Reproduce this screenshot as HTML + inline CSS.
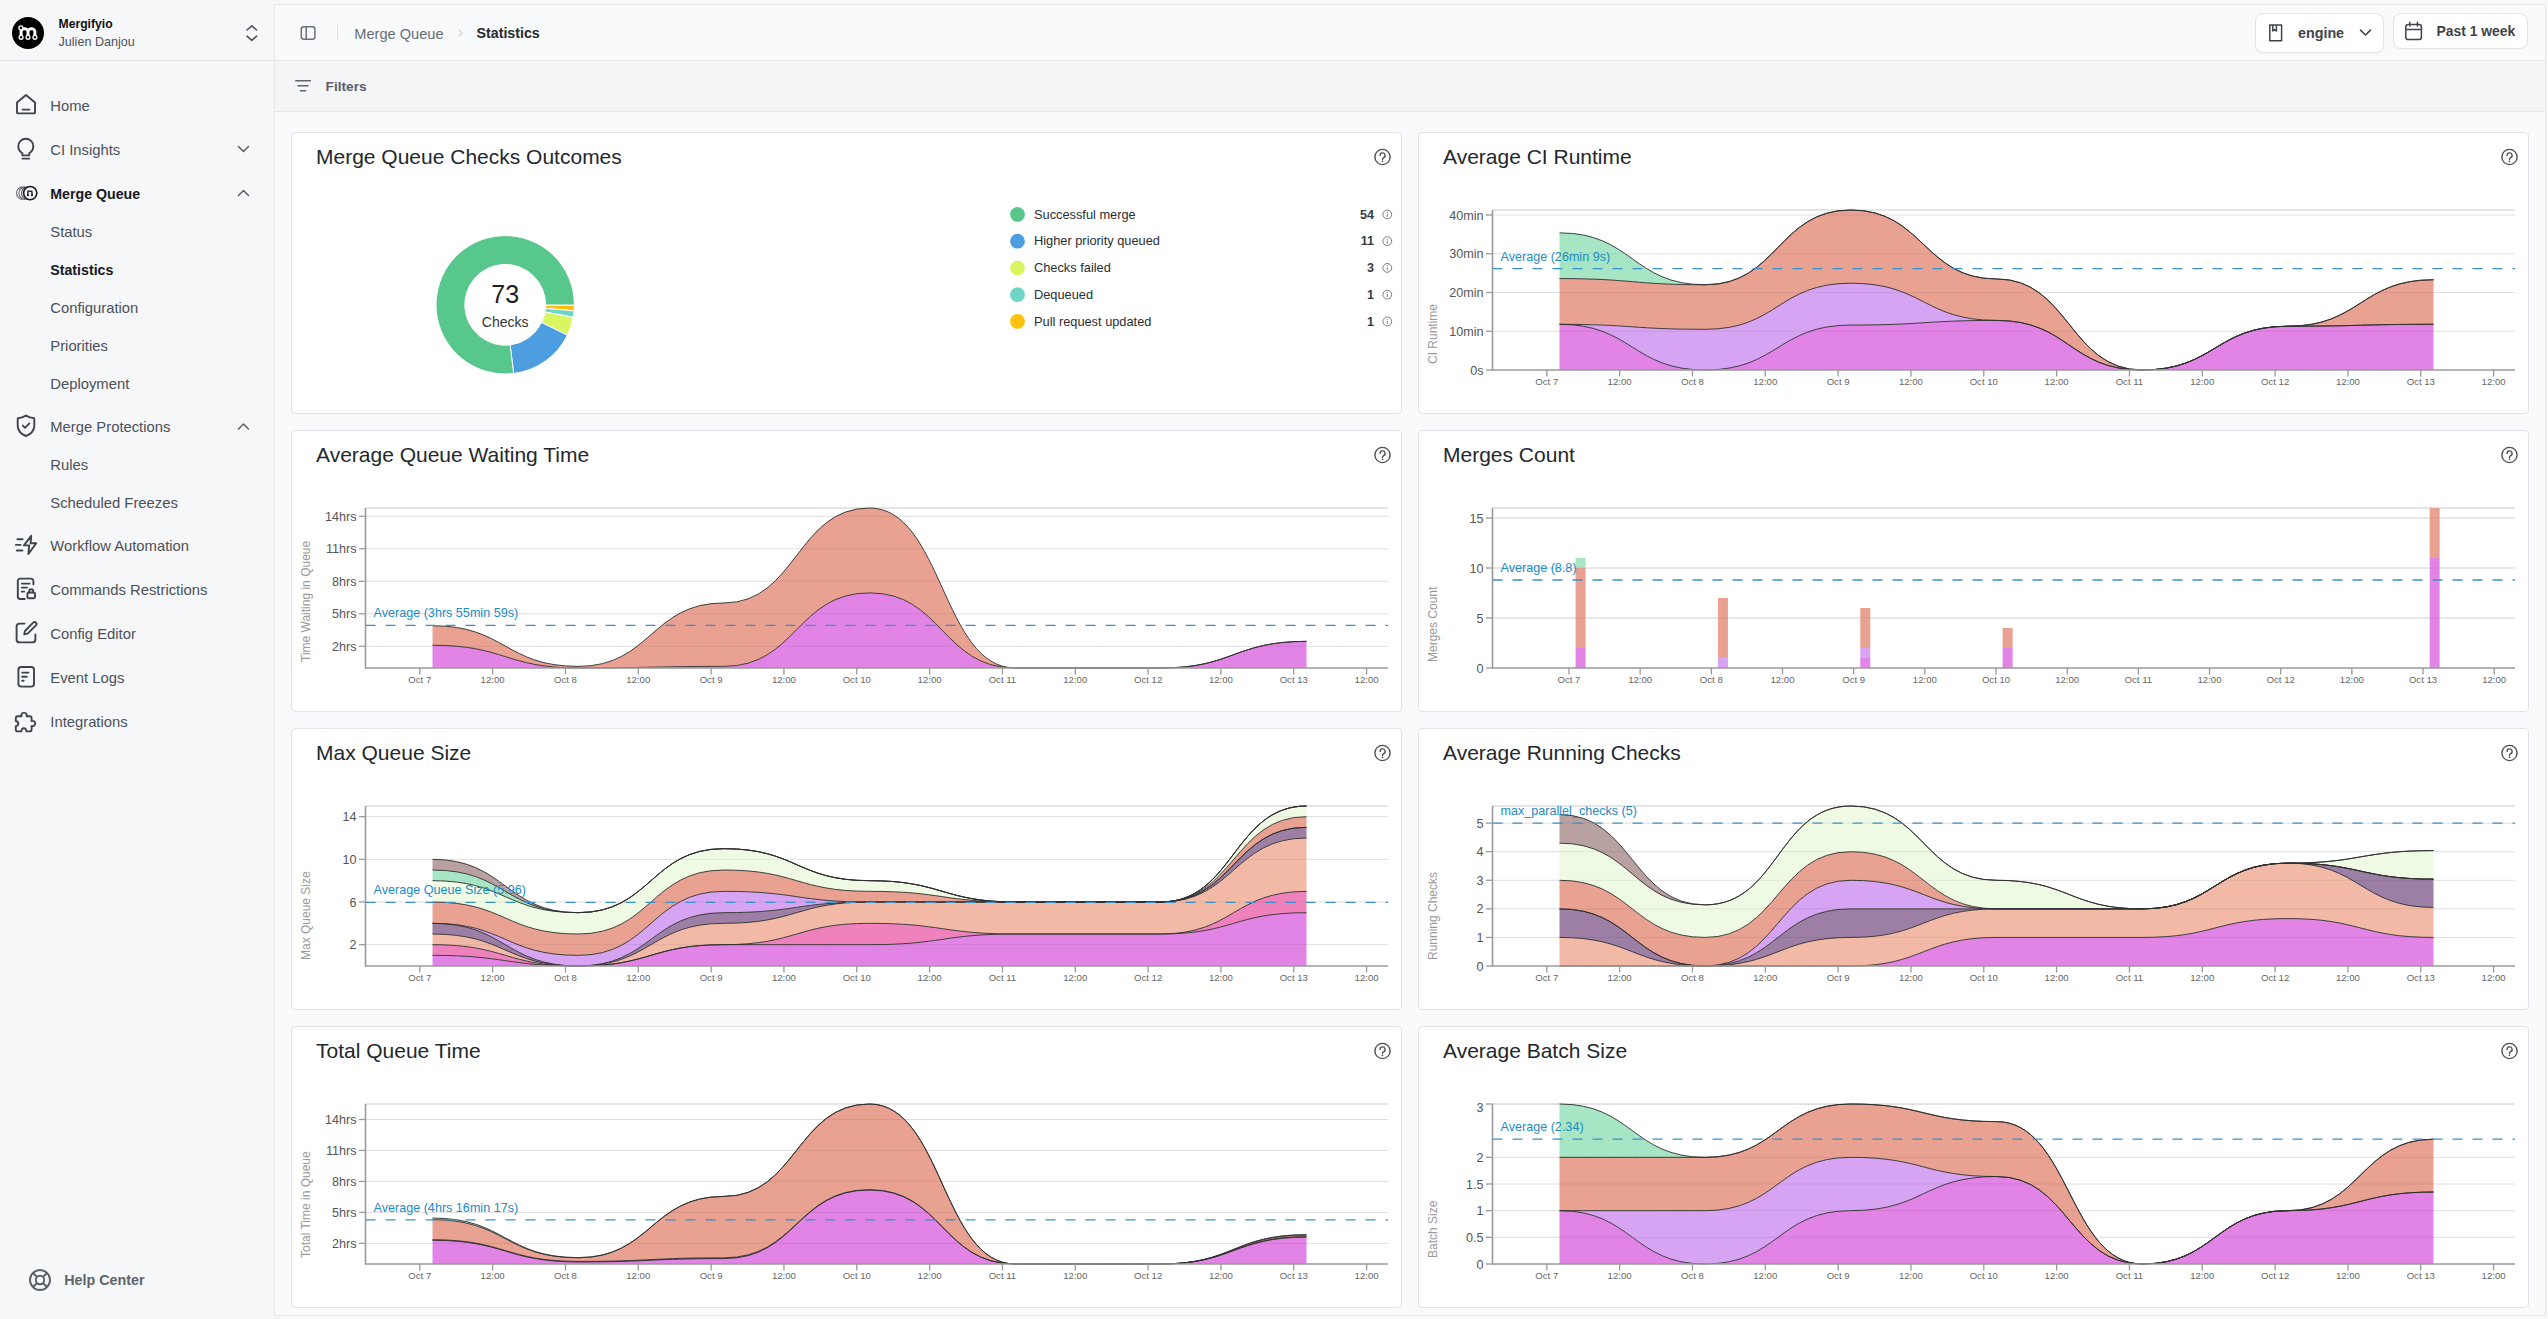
<!DOCTYPE html>
<html><head><meta charset="utf-8"><title>Merge Queue Statistics</title>
<style>
html,body{margin:0;padding:0;}
body{width:2548px;height:1319px;overflow:hidden;position:relative;background:#f6f7f9;font-family:"Liberation Sans", sans-serif;}
svg text{font-family:"Liberation Sans", sans-serif;}
.main{position:absolute;left:274px;top:4px;width:2270px;height:1310px;border:1px solid #e6e8eb;border-radius:2px;background:#f9fafb;overflow:hidden;}
.hdr{position:absolute;left:0;top:0;width:100%;height:55px;border-bottom:1px solid #e6e8eb;background:#f9fafb;}
.flt{position:absolute;left:0;top:56px;width:100%;height:50px;border-bottom:1px solid #e6e8eb;background:#f4f5f7;}
.card{position:absolute;background:#fff;border:1px solid #dfe2e6;border-radius:4px;}
.ch{position:absolute;overflow:visible;}
.btn{position:absolute;background:#fff;border:1px solid #e0e3e7;border-radius:8px;box-shadow:0 1px 2px rgba(0,0,0,0.04);}
</style></head><body>
<div class="main"><div class="hdr"></div><div class="flt"></div></div>
<div class="card" style="left:291px;top:132px;width:1109px;height:280px"></div><div class="card" style="left:291px;top:430px;width:1109px;height:280px"></div><div class="card" style="left:291px;top:728px;width:1109px;height:280px"></div><div class="card" style="left:291px;top:1026px;width:1109px;height:280px"></div><div class="card" style="left:1418px;top:132px;width:1109px;height:280px"></div><div class="card" style="left:1418px;top:430px;width:1109px;height:280px"></div><div class="card" style="left:1418px;top:728px;width:1109px;height:280px"></div><div class="card" style="left:1418px;top:1026px;width:1109px;height:280px"></div>
<svg class="ch" style="left:0;top:0" width="274" height="1319" viewBox="0 0 274 1319">
<circle cx="28" cy="33" r="16" fill="#000"/>
<path d="M21.1,36.2 V31.6 A3.45,2.9 0 0 1 28,31.6 V36.2 M28,31.6 A3.45,2.9 0 0 1 34.9,31.6 V36.2" fill="none" stroke="#fff" stroke-width="3"/>
<circle cx="20.9" cy="27.9" r="1.95" fill="#000" stroke="#fff" stroke-width="1.3"/>
<circle cx="21.1" cy="37.3" r="1.95" fill="#000" stroke="#fff" stroke-width="1.3"/>
<circle cx="28" cy="37.3" r="1.95" fill="#000" stroke="#fff" stroke-width="1.3"/>
<circle cx="34.9" cy="37.3" r="1.95" fill="#000" stroke="#fff" stroke-width="1.3"/>
<text x="58.5" y="28" font-size="12.2" fill="#111" font-weight="700" text-anchor="start" >Mergifyio</text>
<text x="58.5" y="46" font-size="12.6" fill="#4b5058" text-anchor="start" >Julien Danjou</text>
<path d="M247,30 L251.8,25.8 L256.6,30 M247,36.2 L251.8,40.4 L256.6,36.2" fill="none" stroke="#4b5058" stroke-width="1.6" stroke-linecap="round" stroke-linejoin="round"/>
<line x1="0" y1="60.5" x2="274" y2="60.5" stroke="#e3e6ea" stroke-width="1"/>
<text x="50.3" y="110.8" font-size="14.8" fill="#4b5058" text-anchor="start" >Home</text>
<text x="50.3" y="155" font-size="14.8" fill="#4b5058" text-anchor="start" >CI Insights</text>
<text x="50.3" y="199.2" font-size="14.2" fill="#16191d" font-weight="700" text-anchor="start" >Merge Queue</text>
<text x="50.3" y="237" font-size="14.8" fill="#4b5058" text-anchor="start" >Status</text>
<text x="50.3" y="275" font-size="14.2" fill="#16191d" font-weight="700" text-anchor="start" >Statistics</text>
<text x="50.3" y="313.3" font-size="14.8" fill="#4b5058" text-anchor="start" >Configuration</text>
<text x="50.3" y="351" font-size="14.8" fill="#4b5058" text-anchor="start" >Priorities</text>
<text x="50.3" y="389" font-size="14.8" fill="#4b5058" text-anchor="start" >Deployment</text>
<text x="50.3" y="432" font-size="14.8" fill="#4b5058" text-anchor="start" >Merge Protections</text>
<text x="50.3" y="470" font-size="14.8" fill="#4b5058" text-anchor="start" >Rules</text>
<text x="50.3" y="508" font-size="14.8" fill="#4b5058" text-anchor="start" >Scheduled Freezes</text>
<text x="50.3" y="551" font-size="14.8" fill="#4b5058" text-anchor="start" >Workflow Automation</text>
<text x="50.3" y="595" font-size="14.8" fill="#4b5058" text-anchor="start" >Commands Restrictions</text>
<text x="50.3" y="639" font-size="14.8" fill="#4b5058" text-anchor="start" >Config Editor</text>
<text x="50.3" y="683" font-size="14.8" fill="#4b5058" text-anchor="start" >Event Logs</text>
<text x="50.3" y="727" font-size="14.8" fill="#4b5058" text-anchor="start" >Integrations</text>
<path d="M17,102.5 L26,95 L35,102.5 V112.4 a1,1 0 0 1 -1,1 H18 a1,1 0 0 1 -1,-1 Z M22.5,109.6 H29.5" fill="none" stroke="#3f444b" stroke-width="1.9" stroke-linecap="round" stroke-linejoin="round"/>
<path d="M22.4,153.2 C19.8,151.5 18.3,149 18.3,146.2 C18.3,141.9 21.8,138.7 25.8,138.7 C29.8,138.7 33.3,141.9 33.3,146.2 C33.3,149 31.8,151.5 29.2,153.2 V155.4 H22.4 Z M22.4,158.6 H29.2" fill="none" stroke="#3f444b" stroke-width="1.9" stroke-linecap="round" stroke-linejoin="round"/>
<path d="M22.6,186.9 A6.1,6.3 0 0 0 22.6,199.5" fill="none" stroke="#3f444b" stroke-opacity="0.75" stroke-width="1.1"/>
<path d="M25,186.9 A6.1,6.3 0 0 0 25,199.5" fill="none" stroke="#3f444b" stroke-opacity="0.8" stroke-width="1.1"/>
<path d="M27.6,186.9 A6.1,6.3 0 0 0 27.6,199.5" fill="none" stroke="#3f444b" stroke-opacity="0.9" stroke-width="1.1"/>
<circle cx="30.2" cy="193.1" r="6.6" fill="#f6f7f9" stroke="#1a1d21" stroke-width="1.6"/>
<path d="M27.9,195.6 V190.6 M27.9,191.3 H31.4 a0.6,0.6 0 0 1 0.6,0.6 V195.6" fill="none" stroke="#2a2d31" stroke-width="1.5"/>
<circle cx="27.9" cy="195.3" r="1" fill="#111"/><circle cx="32" cy="195.3" r="1" fill="#111"/>
<path d="M238.5,146.5 L243.5,151.5 L248.5,146.5" fill="none" stroke="#5b6068" stroke-width="1.5" stroke-linecap="round" stroke-linejoin="round"/>
<path d="M238.5,195.5 L243.5,190.5 L248.5,195.5" fill="none" stroke="#5b6068" stroke-width="1.5" stroke-linecap="round" stroke-linejoin="round"/>
<path d="M238.5,429 L243.5,424 L248.5,429" fill="none" stroke="#5b6068" stroke-width="1.5" stroke-linecap="round" stroke-linejoin="round"/>
<path d="M26,415.6 C28.6,417.6 31.5,418.2 34.2,418.2 C34.4,421.5 34.4,424.5 34.2,427 C33.6,431.5 30,434.5 26,436 C22,434.5 18.4,431.5 17.8,427 C17.6,424.5 17.6,421.5 17.8,418.2 C20.5,418.2 23.4,417.6 26,415.6 Z M22.8,425.6 L25,427.8 L29.4,423.4" fill="none" stroke="#3f444b" stroke-width="1.9" stroke-linecap="round" stroke-linejoin="round"/>
<path d="M31.2,535.8 L23.9,545.4 H29.2 L28.4,554 L36.2,543.3 H30.6 Z" fill="none" stroke="#3f444b" stroke-width="1.9" stroke-linecap="round" stroke-linejoin="round"/><path d="M17.4,539.3 H22.6 M15.9,544.9 H20.6 M16.8,550.5 H22.4" fill="none" stroke="#3f444b" stroke-width="1.9" stroke-linecap="round" stroke-linejoin="round"/>
<path d="M24.7,599 H20.2 a2.4,2.4 0 0 1 -2.4,-2.4 V581 a2.4,2.4 0 0 1 2.4,-2.4 H31 a2.4,2.4 0 0 1 2.4,2.4 V584.4 M21.8,583.6 H29.6 M21.8,587.6 H27 M21.8,591.6 H24.2" fill="none" stroke="#3f444b" stroke-width="1.9" stroke-linecap="round" stroke-linejoin="round"/>
<rect x="27.4" y="592.5" width="7.6" height="5.8" rx="1.4" fill="none" stroke="#3f444b" stroke-width="1.9" stroke-linecap="round" stroke-linejoin="round"/><path d="M29.2,592.5 V591.3 a2,2 0 0 1 4,0 V592.5" fill="none" stroke="#3f444b" stroke-width="1.9" stroke-linecap="round" stroke-linejoin="round"/>
<path d="M24.6,623.6 H19.6 a3,3 0 0 0 -3,3 V639.4 a3,3 0 0 0 3,3 H32.4 a3,3 0 0 0 3,-3 V634.4" fill="none" stroke="#3f444b" stroke-width="1.9" stroke-linecap="round" stroke-linejoin="round"/><path d="M33.2,622.6 a1.9,1.9 0 0 1 2.7,2.7 L27.6,633.6 L24.2,634.4 L25,631 Z" fill="none" stroke="#3f444b" stroke-width="1.9" stroke-linecap="round" stroke-linejoin="round"/>
<rect x="18.4" y="667" width="15.6" height="19.6" rx="2.8" fill="none" stroke="#3f444b" stroke-width="1.9" stroke-linecap="round" stroke-linejoin="round"/><path d="M22.2,672.6 H28.4 M22.2,676.7 H26.8 M22.2,680.7 H23.6" fill="none" stroke="#3f444b" stroke-width="1.9" stroke-linecap="round" stroke-linejoin="round"/>
<path d="M17.8,716.2 H21.5 a2.7,2.7 0 1 1 5.1,0 H29.6 a2,2 0 0 1 2,2 V721 a2.7,2.7 0 1 1 0,5.1 V729.4 a2,2 0 0 1 -2,2 H26.3 a2.5,2.5 0 1 0 -4.8,0 H17.8 a2,2 0 0 1 -2,-2 V726.1 a2.5,2.5 0 1 0 0,-5 V718.2 a2,2 0 0 1 2,-2 Z" fill="none" stroke="#3f444b" stroke-width="1.9" stroke-linecap="round" stroke-linejoin="round"/>
<circle cx="40" cy="1280" r="10" fill="none" stroke="#5b6068" stroke-width="1.9"/><circle cx="40" cy="1280" r="4.2" fill="none" stroke="#5b6068" stroke-width="1.9"/>
<path d="M33,1273 L37,1277 M47,1273 L43,1277 M33,1287 L37,1283 M47,1287 L43,1283" stroke="#5b6068" stroke-width="1.9"/>
<text x="64.3" y="1285.2" font-size="14.3" fill="#5d636b" font-weight="700" text-anchor="start" >Help Center</text>
</svg>
<svg class="ch" style="left:274px;top:0" width="2274" height="120" viewBox="274 0 2274 120">
<rect x="301.3" y="26.8" width="13.6" height="12.4" rx="2.4" fill="none" stroke="#6b7079" stroke-width="1.5"/><line x1="306.2" y1="26.8" x2="306.2" y2="39.2" stroke="#6b7079" stroke-width="1.5"/>
<line x1="337.6" y1="25" x2="337.6" y2="40.5" stroke="#dfe2e6" stroke-width="1"/>
<text x="354.3" y="39" font-size="14.6" fill="#666d77" text-anchor="start" >Merge Queue</text>
<path d="M458.5,29.5 L462,33 L458.5,36.5" fill="none" stroke="#cfd2d7" stroke-width="1.2"/>
<text x="476.6" y="38.3" font-size="14.2" fill="#262a2f" font-weight="700" text-anchor="start" >Statistics</text>
<path d="M295.2,80.7 H311 M297.6,85.8 H308.6 M300,90.8 H306.2" stroke="#5f6670" stroke-width="1.6"/>
<text x="325.6" y="90.8" font-size="13.7" fill="#59606a" font-weight="700" text-anchor="start" >Filters</text>
</svg>
<div class="btn" style="left:2255px;top:13px;width:127px;height:38px"></div>
<div class="btn" style="left:2393px;top:13px;width:133px;height:34px"></div>
<svg class="ch" style="left:2240px;top:0" width="308" height="60" viewBox="2240 0 308 60">
<path d="M2269.8,25 H2281.6 V40.8 H2269.8 Z M2272.8,25 V31 L2274.6,29.6 L2276.4,31 V25" fill="none" stroke="#3f444b" stroke-width="1.5" stroke-linejoin="round"/>
<text x="2298" y="38" font-size="14.3" fill="#3f444b" font-weight="700" text-anchor="start" >engine</text>
<path d="M2360.5,30.2 L2365.5,35 L2370.5,30.2" fill="none" stroke="#3f444b" stroke-width="1.6" stroke-linecap="round" stroke-linejoin="round"/>
<rect x="2405.8" y="24.4" width="15.6" height="15.2" rx="2.4" fill="none" stroke="#3f444b" stroke-width="1.5"/><path d="M2405.8,29.6 H2421.4 M2409.8,22.2 V26 M2417.4,22.2 V26" stroke="#3f444b" stroke-width="1.5" stroke-linecap="round"/>
<text x="2436.5" y="36.2" font-size="13.9" fill="#3f444b" font-weight="700" text-anchor="start" >Past 1 week</text>
</svg>
<svg class="ch" style="left:1418px;top:132px" width="1111" height="282" viewBox="1418 132 1111 282">
<text x="1443" y="164" font-size="21" fill="#23282d" text-anchor="start" >Average CI Runtime</text>
<circle cx="2509.5" cy="157" r="7.6" fill="none" stroke="#4b5058" stroke-width="1.4"/><path d="M2507.1,155.4 a2.5,2.5 0 1 1 3.6,2.2 c-0.9,0.45 -1.2,0.9 -1.2,1.9" fill="none" stroke="#4b5058" stroke-width="1.4" stroke-linecap="round"/><circle cx="2509.5" cy="161.3" r="0.85" fill="#4b5058"/>
<line x1="1492.5" y1="210" x2="2515" y2="210" stroke="#dcdcdc" stroke-width="1.5"/>
<line x1="1492.5" y1="331.26" x2="2515" y2="331.26" stroke="#dedede" stroke-width="1"/>
<line x1="1492.5" y1="292.52" x2="2515" y2="292.52" stroke="#dedede" stroke-width="1"/>
<line x1="1492.5" y1="253.78" x2="2515" y2="253.78" stroke="#dedede" stroke-width="1"/>
<line x1="1492.5" y1="215.04" x2="2515" y2="215.04" stroke="#dedede" stroke-width="1"/>
<path d="M1559.5,324.29 C1632.34,324.29 1632.34,370 1705.17,370 C1778.01,370 1778.01,325.06 1850.84,325.06 C1923.67,325.06 1923.67,320.41 1996.51,320.41 C2069.34,320.41 2069.34,370 2142.18,370 C2215.01,370 2215.01,326.22 2287.85,326.22 C2360.68,326.22 2360.68,324.29 2433.52,324.29 L2433.52,370 C2360.68,370 2360.68,370 2287.85,370 C2215.01,370 2215.01,370 2142.18,370 C2069.34,370 2069.34,370 1996.51,370 C1923.67,370 1923.67,370 1850.84,370 C1778.01,370 1778.01,370 1705.17,370 C1632.34,370 1632.34,370 1559.5,370 Z" fill="#e283e6"/>
<path d="M1559.5,324.29 C1632.34,324.29 1632.34,329.32 1705.17,329.32 C1778.01,329.32 1778.01,283.22 1850.84,283.22 C1923.67,283.22 1923.67,320.41 1996.51,320.41 C2069.34,320.41 2069.34,370 2142.18,370 C2215.01,370 2215.01,326.22 2287.85,326.22 C2360.68,326.22 2360.68,324.29 2433.52,324.29 L2433.52,324.29 C2360.68,324.29 2360.68,326.22 2287.85,326.22 C2215.01,326.22 2215.01,370 2142.18,370 C2069.34,370 2069.34,320.41 1996.51,320.41 C1923.67,320.41 1923.67,325.06 1850.84,325.06 C1778.01,325.06 1778.01,370 1705.17,370 C1632.34,370 1632.34,324.29 1559.5,324.29 Z" fill="#d7a3f3"/>
<path d="M1559.5,278.57 C1632.34,278.57 1632.34,284.77 1705.17,284.77 C1778.01,284.77 1778.01,210 1850.84,210 C1923.67,210 1923.67,278.96 1996.51,278.96 C2069.34,278.96 2069.34,370 2142.18,370 C2215.01,370 2215.01,326.22 2287.85,326.22 C2360.68,326.22 2360.68,279.73 2433.52,279.73 L2433.52,324.29 C2360.68,324.29 2360.68,326.22 2287.85,326.22 C2215.01,326.22 2215.01,370 2142.18,370 C2069.34,370 2069.34,320.41 1996.51,320.41 C1923.67,320.41 1923.67,283.22 1850.84,283.22 C1778.01,283.22 1778.01,329.32 1705.17,329.32 C1632.34,329.32 1632.34,324.29 1559.5,324.29 Z" fill="#e9a192"/>
<path d="M1559.5,232.86 C1632.34,232.86 1632.34,284.77 1705.17,284.77 C1778.01,284.77 1778.01,210 1850.84,210 C1923.67,210 1923.67,278.96 1996.51,278.96 C2069.34,278.96 2069.34,370 2142.18,370 C2215.01,370 2215.01,326.22 2287.85,326.22 C2360.68,326.22 2360.68,279.73 2433.52,279.73 L2433.52,279.73 C2360.68,279.73 2360.68,326.22 2287.85,326.22 C2215.01,326.22 2215.01,370 2142.18,370 C2069.34,370 2069.34,278.96 1996.51,278.96 C1923.67,278.96 1923.67,210 1850.84,210 C1778.01,210 1778.01,284.77 1705.17,284.77 C1632.34,284.77 1632.34,278.57 1559.5,278.57 Z" fill="#a7e6c5"/>
<clipPath id="clip1418_132"><path d="M1559.5,232.86 C1632.34,232.86 1632.34,284.77 1705.17,284.77 C1778.01,284.77 1778.01,210 1850.84,210 C1923.67,210 1923.67,278.96 1996.51,278.96 C2069.34,278.96 2069.34,370 2142.18,370 C2215.01,370 2215.01,326.22 2287.85,326.22 C2360.68,326.22 2360.68,279.73 2433.52,279.73 L2433.52,370 L1559.5,370 Z"/></clipPath><g clip-path="url(#clip1418_132)">
<line x1="1559.5" y1="331.26" x2="2433.52" y2="331.26" stroke="#000" stroke-opacity="0.07" stroke-width="1"/>
<line x1="1559.5" y1="292.52" x2="2433.52" y2="292.52" stroke="#000" stroke-opacity="0.07" stroke-width="1"/>
<line x1="1559.5" y1="253.78" x2="2433.52" y2="253.78" stroke="#000" stroke-opacity="0.07" stroke-width="1"/>
<line x1="1559.5" y1="215.04" x2="2433.52" y2="215.04" stroke="#000" stroke-opacity="0.07" stroke-width="1"/>
</g>
<path d="M1559.5,324.29 C1632.34,324.29 1632.34,370 1705.17,370 C1778.01,370 1778.01,325.06 1850.84,325.06 C1923.67,325.06 1923.67,320.41 1996.51,320.41 C2069.34,320.41 2069.34,370 2142.18,370 C2215.01,370 2215.01,326.22 2287.85,326.22 C2360.68,326.22 2360.68,324.29 2433.52,324.29" fill="none" stroke="#303030" stroke-opacity="0.92" stroke-width="1"/>
<path d="M1559.5,324.29 C1632.34,324.29 1632.34,329.32 1705.17,329.32 C1778.01,329.32 1778.01,283.22 1850.84,283.22 C1923.67,283.22 1923.67,320.41 1996.51,320.41 C2069.34,320.41 2069.34,370 2142.18,370 C2215.01,370 2215.01,326.22 2287.85,326.22 C2360.68,326.22 2360.68,324.29 2433.52,324.29" fill="none" stroke="#303030" stroke-opacity="0.92" stroke-width="1"/>
<path d="M1559.5,278.57 C1632.34,278.57 1632.34,284.77 1705.17,284.77 C1778.01,284.77 1778.01,210 1850.84,210 C1923.67,210 1923.67,278.96 1996.51,278.96 C2069.34,278.96 2069.34,370 2142.18,370 C2215.01,370 2215.01,326.22 2287.85,326.22 C2360.68,326.22 2360.68,279.73 2433.52,279.73" fill="none" stroke="#303030" stroke-opacity="0.92" stroke-width="1"/>
<path d="M1559.5,232.86 C1632.34,232.86 1632.34,284.77 1705.17,284.77 C1778.01,284.77 1778.01,210 1850.84,210 C1923.67,210 1923.67,278.96 1996.51,278.96 C2069.34,278.96 2069.34,370 2142.18,370 C2215.01,370 2215.01,326.22 2287.85,326.22 C2360.68,326.22 2360.68,279.73 2433.52,279.73" fill="none" stroke="#303030" stroke-opacity="0.92" stroke-width="1"/>
<line x1="1492.5" y1="210" x2="1492.5" y2="370.75" stroke="#9a9a9a" stroke-width="1.6"/>
<line x1="1492.5" y1="370" x2="2515" y2="370" stroke="#9a9a9a" stroke-width="1.6"/>
<line x1="1486" y1="370" x2="1492.5" y2="370" stroke="#9a9a9a" stroke-width="1.3"/>
<text x="1483.5" y="374.5" font-size="12.6" fill="#555" text-anchor="end" >0s</text>
<line x1="1486" y1="331.26" x2="1492.5" y2="331.26" stroke="#9a9a9a" stroke-width="1.3"/>
<text x="1483.5" y="335.76" font-size="12.6" fill="#555" text-anchor="end" >10min</text>
<line x1="1486" y1="292.52" x2="1492.5" y2="292.52" stroke="#9a9a9a" stroke-width="1.3"/>
<text x="1483.5" y="297.02" font-size="12.6" fill="#555" text-anchor="end" >20min</text>
<line x1="1486" y1="253.78" x2="1492.5" y2="253.78" stroke="#9a9a9a" stroke-width="1.3"/>
<text x="1483.5" y="258.28" font-size="12.6" fill="#555" text-anchor="end" >30min</text>
<line x1="1486" y1="215.04" x2="1492.5" y2="215.04" stroke="#9a9a9a" stroke-width="1.3"/>
<text x="1483.5" y="219.54" font-size="12.6" fill="#555" text-anchor="end" >40min</text>
<line x1="1546.8" y1="370" x2="1546.8" y2="376.5" stroke="#9a9a9a" stroke-width="1.3"/>
<text x="1546.8" y="385" font-size="9.6" fill="#666" text-anchor="middle" >Oct 7</text>
<line x1="1619.63" y1="370" x2="1619.63" y2="376.5" stroke="#9a9a9a" stroke-width="1.3"/>
<text x="1619.63" y="385" font-size="9.6" fill="#666" text-anchor="middle" >12:00</text>
<line x1="1692.46" y1="370" x2="1692.46" y2="376.5" stroke="#9a9a9a" stroke-width="1.3"/>
<text x="1692.46" y="385" font-size="9.6" fill="#666" text-anchor="middle" >Oct 8</text>
<line x1="1765.29" y1="370" x2="1765.29" y2="376.5" stroke="#9a9a9a" stroke-width="1.3"/>
<text x="1765.29" y="385" font-size="9.6" fill="#666" text-anchor="middle" >12:00</text>
<line x1="1838.12" y1="370" x2="1838.12" y2="376.5" stroke="#9a9a9a" stroke-width="1.3"/>
<text x="1838.12" y="385" font-size="9.6" fill="#666" text-anchor="middle" >Oct 9</text>
<line x1="1910.95" y1="370" x2="1910.95" y2="376.5" stroke="#9a9a9a" stroke-width="1.3"/>
<text x="1910.95" y="385" font-size="9.6" fill="#666" text-anchor="middle" >12:00</text>
<line x1="1983.78" y1="370" x2="1983.78" y2="376.5" stroke="#9a9a9a" stroke-width="1.3"/>
<text x="1983.78" y="385" font-size="9.6" fill="#666" text-anchor="middle" >Oct 10</text>
<line x1="2056.61" y1="370" x2="2056.61" y2="376.5" stroke="#9a9a9a" stroke-width="1.3"/>
<text x="2056.61" y="385" font-size="9.6" fill="#666" text-anchor="middle" >12:00</text>
<line x1="2129.44" y1="370" x2="2129.44" y2="376.5" stroke="#9a9a9a" stroke-width="1.3"/>
<text x="2129.44" y="385" font-size="9.6" fill="#666" text-anchor="middle" >Oct 11</text>
<line x1="2202.27" y1="370" x2="2202.27" y2="376.5" stroke="#9a9a9a" stroke-width="1.3"/>
<text x="2202.27" y="385" font-size="9.6" fill="#666" text-anchor="middle" >12:00</text>
<line x1="2275.1" y1="370" x2="2275.1" y2="376.5" stroke="#9a9a9a" stroke-width="1.3"/>
<text x="2275.1" y="385" font-size="9.6" fill="#666" text-anchor="middle" >Oct 12</text>
<line x1="2347.93" y1="370" x2="2347.93" y2="376.5" stroke="#9a9a9a" stroke-width="1.3"/>
<text x="2347.93" y="385" font-size="9.6" fill="#666" text-anchor="middle" >12:00</text>
<line x1="2420.76" y1="370" x2="2420.76" y2="376.5" stroke="#9a9a9a" stroke-width="1.3"/>
<text x="2420.76" y="385" font-size="9.6" fill="#666" text-anchor="middle" >Oct 13</text>
<line x1="2493.59" y1="370" x2="2493.59" y2="376.5" stroke="#9a9a9a" stroke-width="1.3"/>
<text x="2493.59" y="385" font-size="9.6" fill="#666" text-anchor="middle" >12:00</text>
<text transform="translate(1437,364) rotate(-90)" font-size="12" fill="#999" text-anchor="start" x="0" y="0">CI Runtime</text>
<line x1="1492.5" y1="268.69" x2="2515" y2="268.69" stroke="#3b91c9" stroke-width="1.3" stroke-dasharray="10 10"/>
<text x="1500.5" y="260.69" font-size="12.6" fill="#218bc5" text-anchor="start" >Average (26min 9s)</text>
</svg><svg class="ch" style="left:291px;top:430px" width="1111" height="282" viewBox="291 430 1111 282">
<text x="316" y="462" font-size="21" fill="#23282d" text-anchor="start" >Average Queue Waiting Time</text>
<circle cx="1382.5" cy="455" r="7.6" fill="none" stroke="#4b5058" stroke-width="1.4"/><path d="M1380.1,453.4 a2.5,2.5 0 1 1 3.6,2.2 c-0.9,0.45 -1.2,0.9 -1.2,1.9" fill="none" stroke="#4b5058" stroke-width="1.4" stroke-linecap="round"/><circle cx="1382.5" cy="459.3" r="0.85" fill="#4b5058"/>
<line x1="365.5" y1="508" x2="1388" y2="508" stroke="#dcdcdc" stroke-width="1.5"/>
<line x1="365.5" y1="646.32" x2="1388" y2="646.32" stroke="#dedede" stroke-width="1"/>
<line x1="365.5" y1="613.8" x2="1388" y2="613.8" stroke="#dedede" stroke-width="1"/>
<line x1="365.5" y1="581.28" x2="1388" y2="581.28" stroke="#dedede" stroke-width="1"/>
<line x1="365.5" y1="548.76" x2="1388" y2="548.76" stroke="#dedede" stroke-width="1"/>
<line x1="365.5" y1="516.24" x2="1388" y2="516.24" stroke="#dedede" stroke-width="1"/>
<path d="M432.5,645.24 C505.33,645.24 505.33,668 578.17,668 C651,668 651,666.37 723.84,666.37 C796.67,666.37 796.67,592.88 869.51,592.88 C942.35,592.88 942.35,668 1015.18,668 C1088.01,668 1088.01,668 1160.85,668 C1233.68,668 1233.68,641.33 1306.52,641.33 L1306.52,668 C1233.68,668 1233.68,668 1160.85,668 C1088.01,668 1088.01,668 1015.18,668 C942.35,668 942.35,668 869.51,668 C796.67,668 796.67,668 723.84,668 C651,668 651,668 578.17,668 C505.33,668 505.33,668 432.5,668 Z" fill="#e283e6"/>
<path d="M432.5,625.72 C505.33,625.72 505.33,666.37 578.17,666.37 C651,666.37 651,602.96 723.84,602.96 C796.67,602.96 796.67,508 869.51,508 C942.35,508 942.35,668 1015.18,668 C1088.01,668 1088.01,668 1160.85,668 C1233.68,668 1233.68,641.33 1306.52,641.33 L1306.52,641.33 C1233.68,641.33 1233.68,668 1160.85,668 C1088.01,668 1088.01,668 1015.18,668 C942.35,668 942.35,592.88 869.51,592.88 C796.67,592.88 796.67,666.37 723.84,666.37 C651,666.37 651,668 578.17,668 C505.33,668 505.33,645.24 432.5,645.24 Z" fill="#e9a192"/>
<clipPath id="clip291_430"><path d="M432.5,625.72 C505.33,625.72 505.33,666.37 578.17,666.37 C651,666.37 651,602.96 723.84,602.96 C796.67,602.96 796.67,508 869.51,508 C942.35,508 942.35,668 1015.18,668 C1088.01,668 1088.01,668 1160.85,668 C1233.68,668 1233.68,641.33 1306.52,641.33 L1306.52,668 L432.5,668 Z"/></clipPath><g clip-path="url(#clip291_430)">
<line x1="432.5" y1="646.32" x2="1306.52" y2="646.32" stroke="#000" stroke-opacity="0.07" stroke-width="1"/>
<line x1="432.5" y1="613.8" x2="1306.52" y2="613.8" stroke="#000" stroke-opacity="0.07" stroke-width="1"/>
<line x1="432.5" y1="581.28" x2="1306.52" y2="581.28" stroke="#000" stroke-opacity="0.07" stroke-width="1"/>
<line x1="432.5" y1="548.76" x2="1306.52" y2="548.76" stroke="#000" stroke-opacity="0.07" stroke-width="1"/>
<line x1="432.5" y1="516.24" x2="1306.52" y2="516.24" stroke="#000" stroke-opacity="0.07" stroke-width="1"/>
</g>
<path d="M432.5,645.24 C505.33,645.24 505.33,668 578.17,668 C651,668 651,666.37 723.84,666.37 C796.67,666.37 796.67,592.88 869.51,592.88 C942.35,592.88 942.35,668 1015.18,668 C1088.01,668 1088.01,668 1160.85,668 C1233.68,668 1233.68,641.33 1306.52,641.33" fill="none" stroke="#303030" stroke-opacity="0.92" stroke-width="1"/>
<path d="M432.5,625.72 C505.33,625.72 505.33,666.37 578.17,666.37 C651,666.37 651,602.96 723.84,602.96 C796.67,602.96 796.67,508 869.51,508 C942.35,508 942.35,668 1015.18,668 C1088.01,668 1088.01,668 1160.85,668 C1233.68,668 1233.68,641.33 1306.52,641.33" fill="none" stroke="#303030" stroke-opacity="0.92" stroke-width="1"/>
<line x1="365.5" y1="508" x2="365.5" y2="668.75" stroke="#9a9a9a" stroke-width="1.6"/>
<line x1="365.5" y1="668" x2="1388" y2="668" stroke="#9a9a9a" stroke-width="1.6"/>
<line x1="359" y1="646.32" x2="365.5" y2="646.32" stroke="#9a9a9a" stroke-width="1.3"/>
<text x="356.5" y="650.82" font-size="12.6" fill="#555" text-anchor="end" >2hrs</text>
<line x1="359" y1="613.8" x2="365.5" y2="613.8" stroke="#9a9a9a" stroke-width="1.3"/>
<text x="356.5" y="618.3" font-size="12.6" fill="#555" text-anchor="end" >5hrs</text>
<line x1="359" y1="581.28" x2="365.5" y2="581.28" stroke="#9a9a9a" stroke-width="1.3"/>
<text x="356.5" y="585.78" font-size="12.6" fill="#555" text-anchor="end" >8hrs</text>
<line x1="359" y1="548.76" x2="365.5" y2="548.76" stroke="#9a9a9a" stroke-width="1.3"/>
<text x="356.5" y="553.26" font-size="12.6" fill="#555" text-anchor="end" >11hrs</text>
<line x1="359" y1="516.24" x2="365.5" y2="516.24" stroke="#9a9a9a" stroke-width="1.3"/>
<text x="356.5" y="520.74" font-size="12.6" fill="#555" text-anchor="end" >14hrs</text>
<line x1="419.8" y1="668" x2="419.8" y2="674.5" stroke="#9a9a9a" stroke-width="1.3"/>
<text x="419.8" y="683" font-size="9.6" fill="#666" text-anchor="middle" >Oct 7</text>
<line x1="492.63" y1="668" x2="492.63" y2="674.5" stroke="#9a9a9a" stroke-width="1.3"/>
<text x="492.63" y="683" font-size="9.6" fill="#666" text-anchor="middle" >12:00</text>
<line x1="565.46" y1="668" x2="565.46" y2="674.5" stroke="#9a9a9a" stroke-width="1.3"/>
<text x="565.46" y="683" font-size="9.6" fill="#666" text-anchor="middle" >Oct 8</text>
<line x1="638.29" y1="668" x2="638.29" y2="674.5" stroke="#9a9a9a" stroke-width="1.3"/>
<text x="638.29" y="683" font-size="9.6" fill="#666" text-anchor="middle" >12:00</text>
<line x1="711.12" y1="668" x2="711.12" y2="674.5" stroke="#9a9a9a" stroke-width="1.3"/>
<text x="711.12" y="683" font-size="9.6" fill="#666" text-anchor="middle" >Oct 9</text>
<line x1="783.95" y1="668" x2="783.95" y2="674.5" stroke="#9a9a9a" stroke-width="1.3"/>
<text x="783.95" y="683" font-size="9.6" fill="#666" text-anchor="middle" >12:00</text>
<line x1="856.78" y1="668" x2="856.78" y2="674.5" stroke="#9a9a9a" stroke-width="1.3"/>
<text x="856.78" y="683" font-size="9.6" fill="#666" text-anchor="middle" >Oct 10</text>
<line x1="929.61" y1="668" x2="929.61" y2="674.5" stroke="#9a9a9a" stroke-width="1.3"/>
<text x="929.61" y="683" font-size="9.6" fill="#666" text-anchor="middle" >12:00</text>
<line x1="1002.44" y1="668" x2="1002.44" y2="674.5" stroke="#9a9a9a" stroke-width="1.3"/>
<text x="1002.44" y="683" font-size="9.6" fill="#666" text-anchor="middle" >Oct 11</text>
<line x1="1075.27" y1="668" x2="1075.27" y2="674.5" stroke="#9a9a9a" stroke-width="1.3"/>
<text x="1075.27" y="683" font-size="9.6" fill="#666" text-anchor="middle" >12:00</text>
<line x1="1148.1" y1="668" x2="1148.1" y2="674.5" stroke="#9a9a9a" stroke-width="1.3"/>
<text x="1148.1" y="683" font-size="9.6" fill="#666" text-anchor="middle" >Oct 12</text>
<line x1="1220.93" y1="668" x2="1220.93" y2="674.5" stroke="#9a9a9a" stroke-width="1.3"/>
<text x="1220.93" y="683" font-size="9.6" fill="#666" text-anchor="middle" >12:00</text>
<line x1="1293.76" y1="668" x2="1293.76" y2="674.5" stroke="#9a9a9a" stroke-width="1.3"/>
<text x="1293.76" y="683" font-size="9.6" fill="#666" text-anchor="middle" >Oct 13</text>
<line x1="1366.59" y1="668" x2="1366.59" y2="674.5" stroke="#9a9a9a" stroke-width="1.3"/>
<text x="1366.59" y="683" font-size="9.6" fill="#666" text-anchor="middle" >12:00</text>
<text transform="translate(310,662) rotate(-90)" font-size="12" fill="#999" text-anchor="start" x="0" y="0">Time Waiting in Queue</text>
<line x1="365.5" y1="625.37" x2="1388" y2="625.37" stroke="#3b91c9" stroke-width="1.3" stroke-dasharray="10 10"/>
<text x="373.5" y="617.37" font-size="12.6" fill="#218bc5" text-anchor="start" >Average (3hrs 55min 59s)</text>
</svg><svg class="ch" style="left:1418px;top:430px" width="1111" height="282" viewBox="1418 430 1111 282">
<text x="1443" y="462" font-size="21" fill="#23282d" text-anchor="start" >Merges Count</text>
<circle cx="2509.5" cy="455" r="7.6" fill="none" stroke="#4b5058" stroke-width="1.4"/><path d="M2507.1,453.4 a2.5,2.5 0 1 1 3.6,2.2 c-0.9,0.45 -1.2,0.9 -1.2,1.9" fill="none" stroke="#4b5058" stroke-width="1.4" stroke-linecap="round"/><circle cx="2509.5" cy="459.3" r="0.85" fill="#4b5058"/>
<line x1="1492.5" y1="508" x2="2515" y2="508" stroke="#dcdcdc" stroke-width="1.5"/>
<line x1="1492.5" y1="618" x2="2515" y2="618" stroke="#dedede" stroke-width="1"/>
<line x1="1492.5" y1="568" x2="2515" y2="568" stroke="#dedede" stroke-width="1"/>
<line x1="1492.5" y1="518" x2="2515" y2="518" stroke="#dedede" stroke-width="1"/>
<rect x="1575.6" y="648" width="10" height="20" fill="#e283e6"/>
<rect x="1575.6" y="568" width="10" height="80" fill="#e9a192"/>
<rect x="1575.6" y="558" width="10" height="10" fill="#a7e6c5"/>
<rect x="1717.94" y="658" width="10" height="10" fill="#d7a3f3"/>
<rect x="1717.94" y="598" width="10" height="60" fill="#e9a192"/>
<rect x="1860.28" y="658" width="10" height="10" fill="#e283e6"/>
<rect x="1860.28" y="648" width="10" height="10" fill="#d7a3f3"/>
<rect x="1860.28" y="608" width="10" height="40" fill="#e9a192"/>
<rect x="2002.62" y="648" width="10" height="20" fill="#e283e6"/>
<rect x="2002.62" y="628" width="10" height="20" fill="#e9a192"/>
<rect x="2429.64" y="558" width="10" height="110" fill="#e283e6"/>
<rect x="2429.64" y="508" width="10" height="50" fill="#e9a192"/>
<line x1="1492.5" y1="618" x2="2515" y2="618" stroke="#000" stroke-opacity="0.06" stroke-width="1"/>
<line x1="1492.5" y1="568" x2="2515" y2="568" stroke="#000" stroke-opacity="0.06" stroke-width="1"/>
<line x1="1492.5" y1="518" x2="2515" y2="518" stroke="#000" stroke-opacity="0.06" stroke-width="1"/>
<line x1="1492.5" y1="508" x2="1492.5" y2="668.75" stroke="#9a9a9a" stroke-width="1.6"/>
<line x1="1492.5" y1="668" x2="2515" y2="668" stroke="#9a9a9a" stroke-width="1.6"/>
<line x1="1486" y1="668" x2="1492.5" y2="668" stroke="#9a9a9a" stroke-width="1.3"/>
<text x="1483.5" y="672.5" font-size="12.6" fill="#555" text-anchor="end" >0</text>
<line x1="1486" y1="618" x2="1492.5" y2="618" stroke="#9a9a9a" stroke-width="1.3"/>
<text x="1483.5" y="622.5" font-size="12.6" fill="#555" text-anchor="end" >5</text>
<line x1="1486" y1="568" x2="1492.5" y2="568" stroke="#9a9a9a" stroke-width="1.3"/>
<text x="1483.5" y="572.5" font-size="12.6" fill="#555" text-anchor="end" >10</text>
<line x1="1486" y1="518" x2="1492.5" y2="518" stroke="#9a9a9a" stroke-width="1.3"/>
<text x="1483.5" y="522.5" font-size="12.6" fill="#555" text-anchor="end" >15</text>
<line x1="1569" y1="668" x2="1569" y2="674.5" stroke="#9a9a9a" stroke-width="1.3"/>
<text x="1569" y="683" font-size="9.6" fill="#666" text-anchor="middle" >Oct 7</text>
<line x1="1640.17" y1="668" x2="1640.17" y2="674.5" stroke="#9a9a9a" stroke-width="1.3"/>
<text x="1640.17" y="683" font-size="9.6" fill="#666" text-anchor="middle" >12:00</text>
<line x1="1711.34" y1="668" x2="1711.34" y2="674.5" stroke="#9a9a9a" stroke-width="1.3"/>
<text x="1711.34" y="683" font-size="9.6" fill="#666" text-anchor="middle" >Oct 8</text>
<line x1="1782.51" y1="668" x2="1782.51" y2="674.5" stroke="#9a9a9a" stroke-width="1.3"/>
<text x="1782.51" y="683" font-size="9.6" fill="#666" text-anchor="middle" >12:00</text>
<line x1="1853.68" y1="668" x2="1853.68" y2="674.5" stroke="#9a9a9a" stroke-width="1.3"/>
<text x="1853.68" y="683" font-size="9.6" fill="#666" text-anchor="middle" >Oct 9</text>
<line x1="1924.85" y1="668" x2="1924.85" y2="674.5" stroke="#9a9a9a" stroke-width="1.3"/>
<text x="1924.85" y="683" font-size="9.6" fill="#666" text-anchor="middle" >12:00</text>
<line x1="1996.02" y1="668" x2="1996.02" y2="674.5" stroke="#9a9a9a" stroke-width="1.3"/>
<text x="1996.02" y="683" font-size="9.6" fill="#666" text-anchor="middle" >Oct 10</text>
<line x1="2067.19" y1="668" x2="2067.19" y2="674.5" stroke="#9a9a9a" stroke-width="1.3"/>
<text x="2067.19" y="683" font-size="9.6" fill="#666" text-anchor="middle" >12:00</text>
<line x1="2138.36" y1="668" x2="2138.36" y2="674.5" stroke="#9a9a9a" stroke-width="1.3"/>
<text x="2138.36" y="683" font-size="9.6" fill="#666" text-anchor="middle" >Oct 11</text>
<line x1="2209.53" y1="668" x2="2209.53" y2="674.5" stroke="#9a9a9a" stroke-width="1.3"/>
<text x="2209.53" y="683" font-size="9.6" fill="#666" text-anchor="middle" >12:00</text>
<line x1="2280.7" y1="668" x2="2280.7" y2="674.5" stroke="#9a9a9a" stroke-width="1.3"/>
<text x="2280.7" y="683" font-size="9.6" fill="#666" text-anchor="middle" >Oct 12</text>
<line x1="2351.87" y1="668" x2="2351.87" y2="674.5" stroke="#9a9a9a" stroke-width="1.3"/>
<text x="2351.87" y="683" font-size="9.6" fill="#666" text-anchor="middle" >12:00</text>
<line x1="2423.04" y1="668" x2="2423.04" y2="674.5" stroke="#9a9a9a" stroke-width="1.3"/>
<text x="2423.04" y="683" font-size="9.6" fill="#666" text-anchor="middle" >Oct 13</text>
<line x1="2494.21" y1="668" x2="2494.21" y2="674.5" stroke="#9a9a9a" stroke-width="1.3"/>
<text x="2494.21" y="683" font-size="9.6" fill="#666" text-anchor="middle" >12:00</text>
<text transform="translate(1437,662) rotate(-90)" font-size="12" fill="#999" text-anchor="start" x="0" y="0">Merges Count</text>
<line x1="1492.5" y1="580" x2="2515" y2="580" stroke="#3b91c9" stroke-width="1.3" stroke-dasharray="10 10"/>
<text x="1500.5" y="572" font-size="12.6" fill="#218bc5" text-anchor="start" >Average (8.8)</text>
</svg><svg class="ch" style="left:291px;top:728px" width="1111" height="282" viewBox="291 728 1111 282">
<text x="316" y="760" font-size="21" fill="#23282d" text-anchor="start" >Max Queue Size</text>
<circle cx="1382.5" cy="753" r="7.6" fill="none" stroke="#4b5058" stroke-width="1.4"/><path d="M1380.1,751.4 a2.5,2.5 0 1 1 3.6,2.2 c-0.9,0.45 -1.2,0.9 -1.2,1.9" fill="none" stroke="#4b5058" stroke-width="1.4" stroke-linecap="round"/><circle cx="1382.5" cy="757.3" r="0.85" fill="#4b5058"/>
<line x1="365.5" y1="806" x2="1388" y2="806" stroke="#dcdcdc" stroke-width="1.5"/>
<line x1="365.5" y1="944.67" x2="1388" y2="944.67" stroke="#dedede" stroke-width="1"/>
<line x1="365.5" y1="902" x2="1388" y2="902" stroke="#dedede" stroke-width="1"/>
<line x1="365.5" y1="859.33" x2="1388" y2="859.33" stroke="#dedede" stroke-width="1"/>
<line x1="365.5" y1="816.67" x2="1388" y2="816.67" stroke="#dedede" stroke-width="1"/>
<path d="M432.5,955.33 C505.33,955.33 505.33,966 578.17,966 C651,966 651,944.67 723.84,944.67 C796.67,944.67 796.67,944.67 869.51,944.67 C942.35,944.67 942.35,934 1015.18,934 C1088.01,934 1088.01,934 1160.85,934 C1233.68,934 1233.68,912.67 1306.52,912.67 L1306.52,966 C1233.68,966 1233.68,966 1160.85,966 C1088.01,966 1088.01,966 1015.18,966 C942.35,966 942.35,966 869.51,966 C796.67,966 796.67,966 723.84,966 C651,966 651,966 578.17,966 C505.33,966 505.33,966 432.5,966 Z" fill="#e283e6"/>
<path d="M432.5,944.67 C505.33,944.67 505.33,966 578.17,966 C651,966 651,944.67 723.84,944.67 C796.67,944.67 796.67,923.33 869.51,923.33 C942.35,923.33 942.35,934 1015.18,934 C1088.01,934 1088.01,934 1160.85,934 C1233.68,934 1233.68,891.33 1306.52,891.33 L1306.52,912.67 C1233.68,912.67 1233.68,934 1160.85,934 C1088.01,934 1088.01,934 1015.18,934 C942.35,934 942.35,944.67 869.51,944.67 C796.67,944.67 796.67,944.67 723.84,944.67 C651,944.67 651,966 578.17,966 C505.33,966 505.33,955.33 432.5,955.33 Z" fill="#ef82bd"/>
<path d="M432.5,934 C505.33,934 505.33,966 578.17,966 C651,966 651,923.33 723.84,923.33 C796.67,923.33 796.67,902 869.51,902 C942.35,902 942.35,902 1015.18,902 C1088.01,902 1088.01,902 1160.85,902 C1233.68,902 1233.68,838 1306.52,838 L1306.52,891.33 C1233.68,891.33 1233.68,934 1160.85,934 C1088.01,934 1088.01,934 1015.18,934 C942.35,934 942.35,923.33 869.51,923.33 C796.67,923.33 796.67,944.67 723.84,944.67 C651,944.67 651,966 578.17,966 C505.33,966 505.33,944.67 432.5,944.67 Z" fill="#f2baa6"/>
<path d="M432.5,923.33 C505.33,923.33 505.33,966 578.17,966 C651,966 651,912.67 723.84,912.67 C796.67,912.67 796.67,902 869.51,902 C942.35,902 942.35,902 1015.18,902 C1088.01,902 1088.01,902 1160.85,902 C1233.68,902 1233.68,827.33 1306.52,827.33 L1306.52,838 C1233.68,838 1233.68,902 1160.85,902 C1088.01,902 1088.01,902 1015.18,902 C942.35,902 942.35,902 869.51,902 C796.67,902 796.67,923.33 723.84,923.33 C651,923.33 651,966 578.17,966 C505.33,966 505.33,934 432.5,934 Z" fill="#9d7fa6"/>
<path d="M432.5,923.33 C505.33,923.33 505.33,955.33 578.17,955.33 C651,955.33 651,891.33 723.84,891.33 C796.67,891.33 796.67,902 869.51,902 C942.35,902 942.35,902 1015.18,902 C1088.01,902 1088.01,902 1160.85,902 C1233.68,902 1233.68,827.33 1306.52,827.33 L1306.52,827.33 C1233.68,827.33 1233.68,902 1160.85,902 C1088.01,902 1088.01,902 1015.18,902 C942.35,902 942.35,902 869.51,902 C796.67,902 796.67,912.67 723.84,912.67 C651,912.67 651,966 578.17,966 C505.33,966 505.33,923.33 432.5,923.33 Z" fill="#d7a3f3"/>
<path d="M432.5,902 C505.33,902 505.33,934 578.17,934 C651,934 651,870 723.84,870 C796.67,870 796.67,891.33 869.51,891.33 C942.35,891.33 942.35,902 1015.18,902 C1088.01,902 1088.01,902 1160.85,902 C1233.68,902 1233.68,816.67 1306.52,816.67 L1306.52,827.33 C1233.68,827.33 1233.68,902 1160.85,902 C1088.01,902 1088.01,902 1015.18,902 C942.35,902 942.35,902 869.51,902 C796.67,902 796.67,891.33 723.84,891.33 C651,891.33 651,955.33 578.17,955.33 C505.33,955.33 505.33,923.33 432.5,923.33 Z" fill="#e9a192"/>
<path d="M432.5,880.67 C505.33,880.67 505.33,912.67 578.17,912.67 C651,912.67 651,848.67 723.84,848.67 C796.67,848.67 796.67,880.67 869.51,880.67 C942.35,880.67 942.35,902 1015.18,902 C1088.01,902 1088.01,902 1160.85,902 C1233.68,902 1233.68,806 1306.52,806 L1306.52,816.67 C1233.68,816.67 1233.68,902 1160.85,902 C1088.01,902 1088.01,902 1015.18,902 C942.35,902 942.35,891.33 869.51,891.33 C796.67,891.33 796.67,870 723.84,870 C651,870 651,934 578.17,934 C505.33,934 505.33,902 432.5,902 Z" fill="#eefae3"/>
<path d="M432.5,870 C505.33,870 505.33,912.67 578.17,912.67 C651,912.67 651,848.67 723.84,848.67 C796.67,848.67 796.67,880.67 869.51,880.67 C942.35,880.67 942.35,902 1015.18,902 C1088.01,902 1088.01,902 1160.85,902 C1233.68,902 1233.68,806 1306.52,806 L1306.52,806 C1233.68,806 1233.68,902 1160.85,902 C1088.01,902 1088.01,902 1015.18,902 C942.35,902 942.35,880.67 869.51,880.67 C796.67,880.67 796.67,848.67 723.84,848.67 C651,848.67 651,912.67 578.17,912.67 C505.33,912.67 505.33,880.67 432.5,880.67 Z" fill="#a7e6c5"/>
<path d="M432.5,859.33 C505.33,859.33 505.33,912.67 578.17,912.67 C651,912.67 651,848.67 723.84,848.67 C796.67,848.67 796.67,880.67 869.51,880.67 C942.35,880.67 942.35,902 1015.18,902 C1088.01,902 1088.01,902 1160.85,902 C1233.68,902 1233.68,806 1306.52,806 L1306.52,806 C1233.68,806 1233.68,902 1160.85,902 C1088.01,902 1088.01,902 1015.18,902 C942.35,902 942.35,880.67 869.51,880.67 C796.67,880.67 796.67,848.67 723.84,848.67 C651,848.67 651,912.67 578.17,912.67 C505.33,912.67 505.33,870 432.5,870 Z" fill="#baa1a1"/>
<clipPath id="clip291_728"><path d="M432.5,859.33 C505.33,859.33 505.33,912.67 578.17,912.67 C651,912.67 651,848.67 723.84,848.67 C796.67,848.67 796.67,880.67 869.51,880.67 C942.35,880.67 942.35,902 1015.18,902 C1088.01,902 1088.01,902 1160.85,902 C1233.68,902 1233.68,806 1306.52,806 L1306.52,966 L432.5,966 Z"/></clipPath><g clip-path="url(#clip291_728)">
<line x1="432.5" y1="944.67" x2="1306.52" y2="944.67" stroke="#000" stroke-opacity="0.07" stroke-width="1"/>
<line x1="432.5" y1="902" x2="1306.52" y2="902" stroke="#000" stroke-opacity="0.07" stroke-width="1"/>
<line x1="432.5" y1="859.33" x2="1306.52" y2="859.33" stroke="#000" stroke-opacity="0.07" stroke-width="1"/>
<line x1="432.5" y1="816.67" x2="1306.52" y2="816.67" stroke="#000" stroke-opacity="0.07" stroke-width="1"/>
</g>
<path d="M432.5,955.33 C505.33,955.33 505.33,966 578.17,966 C651,966 651,944.67 723.84,944.67 C796.67,944.67 796.67,944.67 869.51,944.67 C942.35,944.67 942.35,934 1015.18,934 C1088.01,934 1088.01,934 1160.85,934 C1233.68,934 1233.68,912.67 1306.52,912.67" fill="none" stroke="#303030" stroke-opacity="0.92" stroke-width="1"/>
<path d="M432.5,944.67 C505.33,944.67 505.33,966 578.17,966 C651,966 651,944.67 723.84,944.67 C796.67,944.67 796.67,923.33 869.51,923.33 C942.35,923.33 942.35,934 1015.18,934 C1088.01,934 1088.01,934 1160.85,934 C1233.68,934 1233.68,891.33 1306.52,891.33" fill="none" stroke="#303030" stroke-opacity="0.92" stroke-width="1"/>
<path d="M432.5,934 C505.33,934 505.33,966 578.17,966 C651,966 651,923.33 723.84,923.33 C796.67,923.33 796.67,902 869.51,902 C942.35,902 942.35,902 1015.18,902 C1088.01,902 1088.01,902 1160.85,902 C1233.68,902 1233.68,838 1306.52,838" fill="none" stroke="#303030" stroke-opacity="0.92" stroke-width="1"/>
<path d="M432.5,923.33 C505.33,923.33 505.33,966 578.17,966 C651,966 651,912.67 723.84,912.67 C796.67,912.67 796.67,902 869.51,902 C942.35,902 942.35,902 1015.18,902 C1088.01,902 1088.01,902 1160.85,902 C1233.68,902 1233.68,827.33 1306.52,827.33" fill="none" stroke="#303030" stroke-opacity="0.92" stroke-width="1"/>
<path d="M432.5,923.33 C505.33,923.33 505.33,955.33 578.17,955.33 C651,955.33 651,891.33 723.84,891.33 C796.67,891.33 796.67,902 869.51,902 C942.35,902 942.35,902 1015.18,902 C1088.01,902 1088.01,902 1160.85,902 C1233.68,902 1233.68,827.33 1306.52,827.33" fill="none" stroke="#303030" stroke-opacity="0.92" stroke-width="1"/>
<path d="M432.5,902 C505.33,902 505.33,934 578.17,934 C651,934 651,870 723.84,870 C796.67,870 796.67,891.33 869.51,891.33 C942.35,891.33 942.35,902 1015.18,902 C1088.01,902 1088.01,902 1160.85,902 C1233.68,902 1233.68,816.67 1306.52,816.67" fill="none" stroke="#303030" stroke-opacity="0.92" stroke-width="1"/>
<path d="M432.5,880.67 C505.33,880.67 505.33,912.67 578.17,912.67 C651,912.67 651,848.67 723.84,848.67 C796.67,848.67 796.67,880.67 869.51,880.67 C942.35,880.67 942.35,902 1015.18,902 C1088.01,902 1088.01,902 1160.85,902 C1233.68,902 1233.68,806 1306.52,806" fill="none" stroke="#303030" stroke-opacity="0.92" stroke-width="1"/>
<path d="M432.5,870 C505.33,870 505.33,912.67 578.17,912.67 C651,912.67 651,848.67 723.84,848.67 C796.67,848.67 796.67,880.67 869.51,880.67 C942.35,880.67 942.35,902 1015.18,902 C1088.01,902 1088.01,902 1160.85,902 C1233.68,902 1233.68,806 1306.52,806" fill="none" stroke="#303030" stroke-opacity="0.92" stroke-width="1"/>
<path d="M432.5,859.33 C505.33,859.33 505.33,912.67 578.17,912.67 C651,912.67 651,848.67 723.84,848.67 C796.67,848.67 796.67,880.67 869.51,880.67 C942.35,880.67 942.35,902 1015.18,902 C1088.01,902 1088.01,902 1160.85,902 C1233.68,902 1233.68,806 1306.52,806" fill="none" stroke="#303030" stroke-opacity="0.92" stroke-width="1"/>
<line x1="365.5" y1="806" x2="365.5" y2="966.75" stroke="#9a9a9a" stroke-width="1.6"/>
<line x1="365.5" y1="966" x2="1388" y2="966" stroke="#9a9a9a" stroke-width="1.6"/>
<line x1="359" y1="944.67" x2="365.5" y2="944.67" stroke="#9a9a9a" stroke-width="1.3"/>
<text x="356.5" y="949.17" font-size="12.6" fill="#555" text-anchor="end" >2</text>
<line x1="359" y1="902" x2="365.5" y2="902" stroke="#9a9a9a" stroke-width="1.3"/>
<text x="356.5" y="906.5" font-size="12.6" fill="#555" text-anchor="end" >6</text>
<line x1="359" y1="859.33" x2="365.5" y2="859.33" stroke="#9a9a9a" stroke-width="1.3"/>
<text x="356.5" y="863.83" font-size="12.6" fill="#555" text-anchor="end" >10</text>
<line x1="359" y1="816.67" x2="365.5" y2="816.67" stroke="#9a9a9a" stroke-width="1.3"/>
<text x="356.5" y="821.17" font-size="12.6" fill="#555" text-anchor="end" >14</text>
<line x1="419.8" y1="966" x2="419.8" y2="972.5" stroke="#9a9a9a" stroke-width="1.3"/>
<text x="419.8" y="981" font-size="9.6" fill="#666" text-anchor="middle" >Oct 7</text>
<line x1="492.63" y1="966" x2="492.63" y2="972.5" stroke="#9a9a9a" stroke-width="1.3"/>
<text x="492.63" y="981" font-size="9.6" fill="#666" text-anchor="middle" >12:00</text>
<line x1="565.46" y1="966" x2="565.46" y2="972.5" stroke="#9a9a9a" stroke-width="1.3"/>
<text x="565.46" y="981" font-size="9.6" fill="#666" text-anchor="middle" >Oct 8</text>
<line x1="638.29" y1="966" x2="638.29" y2="972.5" stroke="#9a9a9a" stroke-width="1.3"/>
<text x="638.29" y="981" font-size="9.6" fill="#666" text-anchor="middle" >12:00</text>
<line x1="711.12" y1="966" x2="711.12" y2="972.5" stroke="#9a9a9a" stroke-width="1.3"/>
<text x="711.12" y="981" font-size="9.6" fill="#666" text-anchor="middle" >Oct 9</text>
<line x1="783.95" y1="966" x2="783.95" y2="972.5" stroke="#9a9a9a" stroke-width="1.3"/>
<text x="783.95" y="981" font-size="9.6" fill="#666" text-anchor="middle" >12:00</text>
<line x1="856.78" y1="966" x2="856.78" y2="972.5" stroke="#9a9a9a" stroke-width="1.3"/>
<text x="856.78" y="981" font-size="9.6" fill="#666" text-anchor="middle" >Oct 10</text>
<line x1="929.61" y1="966" x2="929.61" y2="972.5" stroke="#9a9a9a" stroke-width="1.3"/>
<text x="929.61" y="981" font-size="9.6" fill="#666" text-anchor="middle" >12:00</text>
<line x1="1002.44" y1="966" x2="1002.44" y2="972.5" stroke="#9a9a9a" stroke-width="1.3"/>
<text x="1002.44" y="981" font-size="9.6" fill="#666" text-anchor="middle" >Oct 11</text>
<line x1="1075.27" y1="966" x2="1075.27" y2="972.5" stroke="#9a9a9a" stroke-width="1.3"/>
<text x="1075.27" y="981" font-size="9.6" fill="#666" text-anchor="middle" >12:00</text>
<line x1="1148.1" y1="966" x2="1148.1" y2="972.5" stroke="#9a9a9a" stroke-width="1.3"/>
<text x="1148.1" y="981" font-size="9.6" fill="#666" text-anchor="middle" >Oct 12</text>
<line x1="1220.93" y1="966" x2="1220.93" y2="972.5" stroke="#9a9a9a" stroke-width="1.3"/>
<text x="1220.93" y="981" font-size="9.6" fill="#666" text-anchor="middle" >12:00</text>
<line x1="1293.76" y1="966" x2="1293.76" y2="972.5" stroke="#9a9a9a" stroke-width="1.3"/>
<text x="1293.76" y="981" font-size="9.6" fill="#666" text-anchor="middle" >Oct 13</text>
<line x1="1366.59" y1="966" x2="1366.59" y2="972.5" stroke="#9a9a9a" stroke-width="1.3"/>
<text x="1366.59" y="981" font-size="9.6" fill="#666" text-anchor="middle" >12:00</text>
<text transform="translate(310,960) rotate(-90)" font-size="12" fill="#999" text-anchor="start" x="0" y="0">Max Queue Size</text>
<line x1="365.5" y1="902.43" x2="1388" y2="902.43" stroke="#3b91c9" stroke-width="1.3" stroke-dasharray="10 10"/>
<text x="373.5" y="894.43" font-size="12.6" fill="#218bc5" text-anchor="start" >Average Queue Size (5.96)</text>
</svg><svg class="ch" style="left:1418px;top:728px" width="1111" height="282" viewBox="1418 728 1111 282">
<text x="1443" y="760" font-size="21" fill="#23282d" text-anchor="start" >Average Running Checks</text>
<circle cx="2509.5" cy="753" r="7.6" fill="none" stroke="#4b5058" stroke-width="1.4"/><path d="M2507.1,751.4 a2.5,2.5 0 1 1 3.6,2.2 c-0.9,0.45 -1.2,0.9 -1.2,1.9" fill="none" stroke="#4b5058" stroke-width="1.4" stroke-linecap="round"/><circle cx="2509.5" cy="757.3" r="0.85" fill="#4b5058"/>
<line x1="1492.5" y1="806" x2="2515" y2="806" stroke="#dcdcdc" stroke-width="1.5"/>
<line x1="1492.5" y1="937.43" x2="2515" y2="937.43" stroke="#dedede" stroke-width="1"/>
<line x1="1492.5" y1="908.86" x2="2515" y2="908.86" stroke="#dedede" stroke-width="1"/>
<line x1="1492.5" y1="880.29" x2="2515" y2="880.29" stroke="#dedede" stroke-width="1"/>
<line x1="1492.5" y1="851.71" x2="2515" y2="851.71" stroke="#dedede" stroke-width="1"/>
<line x1="1492.5" y1="823.14" x2="2515" y2="823.14" stroke="#dedede" stroke-width="1"/>
<path d="M1559.5,966 C1632.34,966 1632.34,966 1705.17,966 C1778.01,966 1778.01,966 1850.84,966 C1923.67,966 1923.67,937.43 1996.51,937.43 C2069.34,937.43 2069.34,937.43 2142.18,937.43 C2215.01,937.43 2215.01,918.57 2287.85,918.57 C2360.68,918.57 2360.68,937.43 2433.52,937.43 L2433.52,966 C2360.68,966 2360.68,966 2287.85,966 C2215.01,966 2215.01,966 2142.18,966 C2069.34,966 2069.34,966 1996.51,966 C1923.67,966 1923.67,966 1850.84,966 C1778.01,966 1778.01,966 1705.17,966 C1632.34,966 1632.34,966 1559.5,966 Z" fill="#e283e6"/>
<path d="M1559.5,937.43 C1632.34,937.43 1632.34,966 1705.17,966 C1778.01,966 1778.01,937.43 1850.84,937.43 C1923.67,937.43 1923.67,908.86 1996.51,908.86 C2069.34,908.86 2069.34,908.86 2142.18,908.86 C2215.01,908.86 2215.01,863.14 2287.85,863.14 C2360.68,863.14 2360.68,907.43 2433.52,907.43 L2433.52,937.43 C2360.68,937.43 2360.68,918.57 2287.85,918.57 C2215.01,918.57 2215.01,937.43 2142.18,937.43 C2069.34,937.43 2069.34,937.43 1996.51,937.43 C1923.67,937.43 1923.67,966 1850.84,966 C1778.01,966 1778.01,966 1705.17,966 C1632.34,966 1632.34,966 1559.5,966 Z" fill="#f2baa6"/>
<path d="M1559.5,908.86 C1632.34,908.86 1632.34,966 1705.17,966 C1778.01,966 1778.01,908.86 1850.84,908.86 C1923.67,908.86 1923.67,908.86 1996.51,908.86 C2069.34,908.86 2069.34,908.86 2142.18,908.86 C2215.01,908.86 2215.01,863.14 2287.85,863.14 C2360.68,863.14 2360.68,879.14 2433.52,879.14 L2433.52,907.43 C2360.68,907.43 2360.68,863.14 2287.85,863.14 C2215.01,863.14 2215.01,908.86 2142.18,908.86 C2069.34,908.86 2069.34,908.86 1996.51,908.86 C1923.67,908.86 1923.67,937.43 1850.84,937.43 C1778.01,937.43 1778.01,966 1705.17,966 C1632.34,966 1632.34,937.43 1559.5,937.43 Z" fill="#9d7fa6"/>
<path d="M1559.5,908.86 C1632.34,908.86 1632.34,966 1705.17,966 C1778.01,966 1778.01,880.29 1850.84,880.29 C1923.67,880.29 1923.67,908.86 1996.51,908.86 C2069.34,908.86 2069.34,908.86 2142.18,908.86 C2215.01,908.86 2215.01,863.14 2287.85,863.14 C2360.68,863.14 2360.68,879.14 2433.52,879.14 L2433.52,879.14 C2360.68,879.14 2360.68,863.14 2287.85,863.14 C2215.01,863.14 2215.01,908.86 2142.18,908.86 C2069.34,908.86 2069.34,908.86 1996.51,908.86 C1923.67,908.86 1923.67,908.86 1850.84,908.86 C1778.01,908.86 1778.01,966 1705.17,966 C1632.34,966 1632.34,908.86 1559.5,908.86 Z" fill="#d7a3f3"/>
<path d="M1559.5,880.29 C1632.34,880.29 1632.34,937.43 1705.17,937.43 C1778.01,937.43 1778.01,851.71 1850.84,851.71 C1923.67,851.71 1923.67,908.86 1996.51,908.86 C2069.34,908.86 2069.34,908.86 2142.18,908.86 C2215.01,908.86 2215.01,863.14 2287.85,863.14 C2360.68,863.14 2360.68,879.14 2433.52,879.14 L2433.52,879.14 C2360.68,879.14 2360.68,863.14 2287.85,863.14 C2215.01,863.14 2215.01,908.86 2142.18,908.86 C2069.34,908.86 2069.34,908.86 1996.51,908.86 C1923.67,908.86 1923.67,880.29 1850.84,880.29 C1778.01,880.29 1778.01,966 1705.17,966 C1632.34,966 1632.34,908.86 1559.5,908.86 Z" fill="#e9a192"/>
<path d="M1559.5,843.14 C1632.34,843.14 1632.34,904.86 1705.17,904.86 C1778.01,904.86 1778.01,806 1850.84,806 C1923.67,806 1923.67,880.29 1996.51,880.29 C2069.34,880.29 2069.34,908.86 2142.18,908.86 C2215.01,908.86 2215.01,863.14 2287.85,863.14 C2360.68,863.14 2360.68,850.57 2433.52,850.57 L2433.52,879.14 C2360.68,879.14 2360.68,863.14 2287.85,863.14 C2215.01,863.14 2215.01,908.86 2142.18,908.86 C2069.34,908.86 2069.34,908.86 1996.51,908.86 C1923.67,908.86 1923.67,851.71 1850.84,851.71 C1778.01,851.71 1778.01,937.43 1705.17,937.43 C1632.34,937.43 1632.34,880.29 1559.5,880.29 Z" fill="#eefae3"/>
<path d="M1559.5,814.57 C1632.34,814.57 1632.34,904.86 1705.17,904.86 C1778.01,904.86 1778.01,806 1850.84,806 C1923.67,806 1923.67,880.29 1996.51,880.29 C2069.34,880.29 2069.34,908.86 2142.18,908.86 C2215.01,908.86 2215.01,863.14 2287.85,863.14 C2360.68,863.14 2360.68,850.57 2433.52,850.57 L2433.52,850.57 C2360.68,850.57 2360.68,863.14 2287.85,863.14 C2215.01,863.14 2215.01,908.86 2142.18,908.86 C2069.34,908.86 2069.34,880.29 1996.51,880.29 C1923.67,880.29 1923.67,806 1850.84,806 C1778.01,806 1778.01,904.86 1705.17,904.86 C1632.34,904.86 1632.34,843.14 1559.5,843.14 Z" fill="#baa1a1"/>
<clipPath id="clip1418_728"><path d="M1559.5,814.57 C1632.34,814.57 1632.34,904.86 1705.17,904.86 C1778.01,904.86 1778.01,806 1850.84,806 C1923.67,806 1923.67,880.29 1996.51,880.29 C2069.34,880.29 2069.34,908.86 2142.18,908.86 C2215.01,908.86 2215.01,863.14 2287.85,863.14 C2360.68,863.14 2360.68,850.57 2433.52,850.57 L2433.52,966 L1559.5,966 Z"/></clipPath><g clip-path="url(#clip1418_728)">
<line x1="1559.5" y1="937.43" x2="2433.52" y2="937.43" stroke="#000" stroke-opacity="0.07" stroke-width="1"/>
<line x1="1559.5" y1="908.86" x2="2433.52" y2="908.86" stroke="#000" stroke-opacity="0.07" stroke-width="1"/>
<line x1="1559.5" y1="880.29" x2="2433.52" y2="880.29" stroke="#000" stroke-opacity="0.07" stroke-width="1"/>
<line x1="1559.5" y1="851.71" x2="2433.52" y2="851.71" stroke="#000" stroke-opacity="0.07" stroke-width="1"/>
<line x1="1559.5" y1="823.14" x2="2433.52" y2="823.14" stroke="#000" stroke-opacity="0.07" stroke-width="1"/>
</g>
<path d="M1559.5,966 C1632.34,966 1632.34,966 1705.17,966 C1778.01,966 1778.01,966 1850.84,966 C1923.67,966 1923.67,937.43 1996.51,937.43 C2069.34,937.43 2069.34,937.43 2142.18,937.43 C2215.01,937.43 2215.01,918.57 2287.85,918.57 C2360.68,918.57 2360.68,937.43 2433.52,937.43" fill="none" stroke="#303030" stroke-opacity="0.92" stroke-width="1"/>
<path d="M1559.5,937.43 C1632.34,937.43 1632.34,966 1705.17,966 C1778.01,966 1778.01,937.43 1850.84,937.43 C1923.67,937.43 1923.67,908.86 1996.51,908.86 C2069.34,908.86 2069.34,908.86 2142.18,908.86 C2215.01,908.86 2215.01,863.14 2287.85,863.14 C2360.68,863.14 2360.68,907.43 2433.52,907.43" fill="none" stroke="#303030" stroke-opacity="0.92" stroke-width="1"/>
<path d="M1559.5,908.86 C1632.34,908.86 1632.34,966 1705.17,966 C1778.01,966 1778.01,908.86 1850.84,908.86 C1923.67,908.86 1923.67,908.86 1996.51,908.86 C2069.34,908.86 2069.34,908.86 2142.18,908.86 C2215.01,908.86 2215.01,863.14 2287.85,863.14 C2360.68,863.14 2360.68,879.14 2433.52,879.14" fill="none" stroke="#303030" stroke-opacity="0.92" stroke-width="1"/>
<path d="M1559.5,908.86 C1632.34,908.86 1632.34,966 1705.17,966 C1778.01,966 1778.01,880.29 1850.84,880.29 C1923.67,880.29 1923.67,908.86 1996.51,908.86 C2069.34,908.86 2069.34,908.86 2142.18,908.86 C2215.01,908.86 2215.01,863.14 2287.85,863.14 C2360.68,863.14 2360.68,879.14 2433.52,879.14" fill="none" stroke="#303030" stroke-opacity="0.92" stroke-width="1"/>
<path d="M1559.5,880.29 C1632.34,880.29 1632.34,937.43 1705.17,937.43 C1778.01,937.43 1778.01,851.71 1850.84,851.71 C1923.67,851.71 1923.67,908.86 1996.51,908.86 C2069.34,908.86 2069.34,908.86 2142.18,908.86 C2215.01,908.86 2215.01,863.14 2287.85,863.14 C2360.68,863.14 2360.68,879.14 2433.52,879.14" fill="none" stroke="#303030" stroke-opacity="0.92" stroke-width="1"/>
<path d="M1559.5,843.14 C1632.34,843.14 1632.34,904.86 1705.17,904.86 C1778.01,904.86 1778.01,806 1850.84,806 C1923.67,806 1923.67,880.29 1996.51,880.29 C2069.34,880.29 2069.34,908.86 2142.18,908.86 C2215.01,908.86 2215.01,863.14 2287.85,863.14 C2360.68,863.14 2360.68,850.57 2433.52,850.57" fill="none" stroke="#303030" stroke-opacity="0.92" stroke-width="1"/>
<path d="M1559.5,814.57 C1632.34,814.57 1632.34,904.86 1705.17,904.86 C1778.01,904.86 1778.01,806 1850.84,806 C1923.67,806 1923.67,880.29 1996.51,880.29 C2069.34,880.29 2069.34,908.86 2142.18,908.86 C2215.01,908.86 2215.01,863.14 2287.85,863.14 C2360.68,863.14 2360.68,850.57 2433.52,850.57" fill="none" stroke="#303030" stroke-opacity="0.92" stroke-width="1"/>
<line x1="1492.5" y1="806" x2="1492.5" y2="966.75" stroke="#9a9a9a" stroke-width="1.6"/>
<line x1="1492.5" y1="966" x2="2515" y2="966" stroke="#9a9a9a" stroke-width="1.6"/>
<line x1="1486" y1="966" x2="1492.5" y2="966" stroke="#9a9a9a" stroke-width="1.3"/>
<text x="1483.5" y="970.5" font-size="12.6" fill="#555" text-anchor="end" >0</text>
<line x1="1486" y1="937.43" x2="1492.5" y2="937.43" stroke="#9a9a9a" stroke-width="1.3"/>
<text x="1483.5" y="941.93" font-size="12.6" fill="#555" text-anchor="end" >1</text>
<line x1="1486" y1="908.86" x2="1492.5" y2="908.86" stroke="#9a9a9a" stroke-width="1.3"/>
<text x="1483.5" y="913.36" font-size="12.6" fill="#555" text-anchor="end" >2</text>
<line x1="1486" y1="880.29" x2="1492.5" y2="880.29" stroke="#9a9a9a" stroke-width="1.3"/>
<text x="1483.5" y="884.79" font-size="12.6" fill="#555" text-anchor="end" >3</text>
<line x1="1486" y1="851.71" x2="1492.5" y2="851.71" stroke="#9a9a9a" stroke-width="1.3"/>
<text x="1483.5" y="856.21" font-size="12.6" fill="#555" text-anchor="end" >4</text>
<line x1="1486" y1="823.14" x2="1492.5" y2="823.14" stroke="#9a9a9a" stroke-width="1.3"/>
<text x="1483.5" y="827.64" font-size="12.6" fill="#555" text-anchor="end" >5</text>
<line x1="1546.8" y1="966" x2="1546.8" y2="972.5" stroke="#9a9a9a" stroke-width="1.3"/>
<text x="1546.8" y="981" font-size="9.6" fill="#666" text-anchor="middle" >Oct 7</text>
<line x1="1619.63" y1="966" x2="1619.63" y2="972.5" stroke="#9a9a9a" stroke-width="1.3"/>
<text x="1619.63" y="981" font-size="9.6" fill="#666" text-anchor="middle" >12:00</text>
<line x1="1692.46" y1="966" x2="1692.46" y2="972.5" stroke="#9a9a9a" stroke-width="1.3"/>
<text x="1692.46" y="981" font-size="9.6" fill="#666" text-anchor="middle" >Oct 8</text>
<line x1="1765.29" y1="966" x2="1765.29" y2="972.5" stroke="#9a9a9a" stroke-width="1.3"/>
<text x="1765.29" y="981" font-size="9.6" fill="#666" text-anchor="middle" >12:00</text>
<line x1="1838.12" y1="966" x2="1838.12" y2="972.5" stroke="#9a9a9a" stroke-width="1.3"/>
<text x="1838.12" y="981" font-size="9.6" fill="#666" text-anchor="middle" >Oct 9</text>
<line x1="1910.95" y1="966" x2="1910.95" y2="972.5" stroke="#9a9a9a" stroke-width="1.3"/>
<text x="1910.95" y="981" font-size="9.6" fill="#666" text-anchor="middle" >12:00</text>
<line x1="1983.78" y1="966" x2="1983.78" y2="972.5" stroke="#9a9a9a" stroke-width="1.3"/>
<text x="1983.78" y="981" font-size="9.6" fill="#666" text-anchor="middle" >Oct 10</text>
<line x1="2056.61" y1="966" x2="2056.61" y2="972.5" stroke="#9a9a9a" stroke-width="1.3"/>
<text x="2056.61" y="981" font-size="9.6" fill="#666" text-anchor="middle" >12:00</text>
<line x1="2129.44" y1="966" x2="2129.44" y2="972.5" stroke="#9a9a9a" stroke-width="1.3"/>
<text x="2129.44" y="981" font-size="9.6" fill="#666" text-anchor="middle" >Oct 11</text>
<line x1="2202.27" y1="966" x2="2202.27" y2="972.5" stroke="#9a9a9a" stroke-width="1.3"/>
<text x="2202.27" y="981" font-size="9.6" fill="#666" text-anchor="middle" >12:00</text>
<line x1="2275.1" y1="966" x2="2275.1" y2="972.5" stroke="#9a9a9a" stroke-width="1.3"/>
<text x="2275.1" y="981" font-size="9.6" fill="#666" text-anchor="middle" >Oct 12</text>
<line x1="2347.93" y1="966" x2="2347.93" y2="972.5" stroke="#9a9a9a" stroke-width="1.3"/>
<text x="2347.93" y="981" font-size="9.6" fill="#666" text-anchor="middle" >12:00</text>
<line x1="2420.76" y1="966" x2="2420.76" y2="972.5" stroke="#9a9a9a" stroke-width="1.3"/>
<text x="2420.76" y="981" font-size="9.6" fill="#666" text-anchor="middle" >Oct 13</text>
<line x1="2493.59" y1="966" x2="2493.59" y2="972.5" stroke="#9a9a9a" stroke-width="1.3"/>
<text x="2493.59" y="981" font-size="9.6" fill="#666" text-anchor="middle" >12:00</text>
<text transform="translate(1437,960) rotate(-90)" font-size="12" fill="#999" text-anchor="start" x="0" y="0">Running Checks</text>
<line x1="1492.5" y1="823.14" x2="2515" y2="823.14" stroke="#3b91c9" stroke-width="1.3" stroke-dasharray="10 10"/>
<text x="1500.5" y="815.14" font-size="12.6" fill="#218bc5" text-anchor="start" >max_parallel_checks (5)</text>
</svg><svg class="ch" style="left:291px;top:1026px" width="1111" height="282" viewBox="291 1026 1111 282">
<text x="316" y="1058" font-size="21" fill="#23282d" text-anchor="start" >Total Queue Time</text>
<circle cx="1382.5" cy="1051" r="7.6" fill="none" stroke="#4b5058" stroke-width="1.4"/><path d="M1380.1,1049.4 a2.5,2.5 0 1 1 3.6,2.2 c-0.9,0.45 -1.2,0.9 -1.2,1.9" fill="none" stroke="#4b5058" stroke-width="1.4" stroke-linecap="round"/><circle cx="1382.5" cy="1055.3" r="0.85" fill="#4b5058"/>
<line x1="365.5" y1="1104" x2="1388" y2="1104" stroke="#dcdcdc" stroke-width="1.5"/>
<line x1="365.5" y1="1243.35" x2="1388" y2="1243.35" stroke="#dedede" stroke-width="1"/>
<line x1="365.5" y1="1212.39" x2="1388" y2="1212.39" stroke="#dedede" stroke-width="1"/>
<line x1="365.5" y1="1181.42" x2="1388" y2="1181.42" stroke="#dedede" stroke-width="1"/>
<line x1="365.5" y1="1150.45" x2="1388" y2="1150.45" stroke="#dedede" stroke-width="1"/>
<line x1="365.5" y1="1119.48" x2="1388" y2="1119.48" stroke="#dedede" stroke-width="1"/>
<path d="M432.5,1240.26 C505.33,1240.26 505.33,1261.94 578.17,1261.94 C651,1261.94 651,1258.63 723.84,1258.63 C796.67,1258.63 796.67,1189.99 869.51,1189.99 C942.35,1189.99 942.35,1264 1015.18,1264 C1088.01,1264 1088.01,1264 1160.85,1264 C1233.68,1264 1233.68,1237.16 1306.52,1237.16 L1306.52,1264 C1233.68,1264 1233.68,1264 1160.85,1264 C1088.01,1264 1088.01,1264 1015.18,1264 C942.35,1264 942.35,1264 869.51,1264 C796.67,1264 796.67,1264 723.84,1264 C651,1264 651,1264 578.17,1264 C505.33,1264 505.33,1264 432.5,1264 Z" fill="#e283e6"/>
<path d="M432.5,1239.74 C505.33,1239.74 505.33,1261.42 578.17,1261.42 C651,1261.42 651,1257.81 723.84,1257.81 C796.67,1257.81 796.67,1189.68 869.51,1189.68 C942.35,1189.68 942.35,1264 1015.18,1264 C1088.01,1264 1088.01,1264 1160.85,1264 C1233.68,1264 1233.68,1236.65 1306.52,1236.65 L1306.52,1237.16 C1233.68,1237.16 1233.68,1264 1160.85,1264 C1088.01,1264 1088.01,1264 1015.18,1264 C942.35,1264 942.35,1189.99 869.51,1189.99 C796.67,1189.99 796.67,1258.63 723.84,1258.63 C651,1258.63 651,1261.94 578.17,1261.94 C505.33,1261.94 505.33,1240.26 432.5,1240.26 Z" fill="#9d7fa6"/>
<path d="M432.5,1219.61 C505.33,1219.61 505.33,1257.81 578.17,1257.81 C651,1257.81 651,1196.39 723.84,1196.39 C796.67,1196.39 796.67,1104 869.51,1104 C942.35,1104 942.35,1264 1015.18,1264 C1088.01,1264 1088.01,1264 1160.85,1264 C1233.68,1264 1233.68,1235.1 1306.52,1235.1 L1306.52,1236.65 C1233.68,1236.65 1233.68,1264 1160.85,1264 C1088.01,1264 1088.01,1264 1015.18,1264 C942.35,1264 942.35,1189.68 869.51,1189.68 C796.67,1189.68 796.67,1257.81 723.84,1257.81 C651,1257.81 651,1261.42 578.17,1261.42 C505.33,1261.42 505.33,1239.74 432.5,1239.74 Z" fill="#e9a192"/>
<path d="M432.5,1218.06 C505.33,1218.06 505.33,1257.6 578.17,1257.6 C651,1257.6 651,1196.39 723.84,1196.39 C796.67,1196.39 796.67,1104 869.51,1104 C942.35,1104 942.35,1264 1015.18,1264 C1088.01,1264 1088.01,1264 1160.85,1264 C1233.68,1264 1233.68,1234.58 1306.52,1234.58 L1306.52,1235.1 C1233.68,1235.1 1233.68,1264 1160.85,1264 C1088.01,1264 1088.01,1264 1015.18,1264 C942.35,1264 942.35,1104 869.51,1104 C796.67,1104 796.67,1196.39 723.84,1196.39 C651,1196.39 651,1257.81 578.17,1257.81 C505.33,1257.81 505.33,1219.61 432.5,1219.61 Z" fill="#a7e6c5"/>
<clipPath id="clip291_1026"><path d="M432.5,1218.06 C505.33,1218.06 505.33,1257.6 578.17,1257.6 C651,1257.6 651,1196.39 723.84,1196.39 C796.67,1196.39 796.67,1104 869.51,1104 C942.35,1104 942.35,1264 1015.18,1264 C1088.01,1264 1088.01,1264 1160.85,1264 C1233.68,1264 1233.68,1234.58 1306.52,1234.58 L1306.52,1264 L432.5,1264 Z"/></clipPath><g clip-path="url(#clip291_1026)">
<line x1="432.5" y1="1243.35" x2="1306.52" y2="1243.35" stroke="#000" stroke-opacity="0.07" stroke-width="1"/>
<line x1="432.5" y1="1212.39" x2="1306.52" y2="1212.39" stroke="#000" stroke-opacity="0.07" stroke-width="1"/>
<line x1="432.5" y1="1181.42" x2="1306.52" y2="1181.42" stroke="#000" stroke-opacity="0.07" stroke-width="1"/>
<line x1="432.5" y1="1150.45" x2="1306.52" y2="1150.45" stroke="#000" stroke-opacity="0.07" stroke-width="1"/>
<line x1="432.5" y1="1119.48" x2="1306.52" y2="1119.48" stroke="#000" stroke-opacity="0.07" stroke-width="1"/>
</g>
<path d="M432.5,1240.26 C505.33,1240.26 505.33,1261.94 578.17,1261.94 C651,1261.94 651,1258.63 723.84,1258.63 C796.67,1258.63 796.67,1189.99 869.51,1189.99 C942.35,1189.99 942.35,1264 1015.18,1264 C1088.01,1264 1088.01,1264 1160.85,1264 C1233.68,1264 1233.68,1237.16 1306.52,1237.16" fill="none" stroke="#303030" stroke-opacity="0.92" stroke-width="1"/>
<path d="M432.5,1239.74 C505.33,1239.74 505.33,1261.42 578.17,1261.42 C651,1261.42 651,1257.81 723.84,1257.81 C796.67,1257.81 796.67,1189.68 869.51,1189.68 C942.35,1189.68 942.35,1264 1015.18,1264 C1088.01,1264 1088.01,1264 1160.85,1264 C1233.68,1264 1233.68,1236.65 1306.52,1236.65" fill="none" stroke="#303030" stroke-opacity="0.92" stroke-width="1"/>
<path d="M432.5,1219.61 C505.33,1219.61 505.33,1257.81 578.17,1257.81 C651,1257.81 651,1196.39 723.84,1196.39 C796.67,1196.39 796.67,1104 869.51,1104 C942.35,1104 942.35,1264 1015.18,1264 C1088.01,1264 1088.01,1264 1160.85,1264 C1233.68,1264 1233.68,1235.1 1306.52,1235.1" fill="none" stroke="#303030" stroke-opacity="0.92" stroke-width="1"/>
<path d="M432.5,1218.06 C505.33,1218.06 505.33,1257.6 578.17,1257.6 C651,1257.6 651,1196.39 723.84,1196.39 C796.67,1196.39 796.67,1104 869.51,1104 C942.35,1104 942.35,1264 1015.18,1264 C1088.01,1264 1088.01,1264 1160.85,1264 C1233.68,1264 1233.68,1234.58 1306.52,1234.58" fill="none" stroke="#303030" stroke-opacity="0.92" stroke-width="1"/>
<line x1="365.5" y1="1104" x2="365.5" y2="1264.75" stroke="#9a9a9a" stroke-width="1.6"/>
<line x1="365.5" y1="1264" x2="1388" y2="1264" stroke="#9a9a9a" stroke-width="1.6"/>
<line x1="359" y1="1243.35" x2="365.5" y2="1243.35" stroke="#9a9a9a" stroke-width="1.3"/>
<text x="356.5" y="1247.85" font-size="12.6" fill="#555" text-anchor="end" >2hrs</text>
<line x1="359" y1="1212.39" x2="365.5" y2="1212.39" stroke="#9a9a9a" stroke-width="1.3"/>
<text x="356.5" y="1216.89" font-size="12.6" fill="#555" text-anchor="end" >5hrs</text>
<line x1="359" y1="1181.42" x2="365.5" y2="1181.42" stroke="#9a9a9a" stroke-width="1.3"/>
<text x="356.5" y="1185.92" font-size="12.6" fill="#555" text-anchor="end" >8hrs</text>
<line x1="359" y1="1150.45" x2="365.5" y2="1150.45" stroke="#9a9a9a" stroke-width="1.3"/>
<text x="356.5" y="1154.95" font-size="12.6" fill="#555" text-anchor="end" >11hrs</text>
<line x1="359" y1="1119.48" x2="365.5" y2="1119.48" stroke="#9a9a9a" stroke-width="1.3"/>
<text x="356.5" y="1123.98" font-size="12.6" fill="#555" text-anchor="end" >14hrs</text>
<line x1="419.8" y1="1264" x2="419.8" y2="1270.5" stroke="#9a9a9a" stroke-width="1.3"/>
<text x="419.8" y="1279" font-size="9.6" fill="#666" text-anchor="middle" >Oct 7</text>
<line x1="492.63" y1="1264" x2="492.63" y2="1270.5" stroke="#9a9a9a" stroke-width="1.3"/>
<text x="492.63" y="1279" font-size="9.6" fill="#666" text-anchor="middle" >12:00</text>
<line x1="565.46" y1="1264" x2="565.46" y2="1270.5" stroke="#9a9a9a" stroke-width="1.3"/>
<text x="565.46" y="1279" font-size="9.6" fill="#666" text-anchor="middle" >Oct 8</text>
<line x1="638.29" y1="1264" x2="638.29" y2="1270.5" stroke="#9a9a9a" stroke-width="1.3"/>
<text x="638.29" y="1279" font-size="9.6" fill="#666" text-anchor="middle" >12:00</text>
<line x1="711.12" y1="1264" x2="711.12" y2="1270.5" stroke="#9a9a9a" stroke-width="1.3"/>
<text x="711.12" y="1279" font-size="9.6" fill="#666" text-anchor="middle" >Oct 9</text>
<line x1="783.95" y1="1264" x2="783.95" y2="1270.5" stroke="#9a9a9a" stroke-width="1.3"/>
<text x="783.95" y="1279" font-size="9.6" fill="#666" text-anchor="middle" >12:00</text>
<line x1="856.78" y1="1264" x2="856.78" y2="1270.5" stroke="#9a9a9a" stroke-width="1.3"/>
<text x="856.78" y="1279" font-size="9.6" fill="#666" text-anchor="middle" >Oct 10</text>
<line x1="929.61" y1="1264" x2="929.61" y2="1270.5" stroke="#9a9a9a" stroke-width="1.3"/>
<text x="929.61" y="1279" font-size="9.6" fill="#666" text-anchor="middle" >12:00</text>
<line x1="1002.44" y1="1264" x2="1002.44" y2="1270.5" stroke="#9a9a9a" stroke-width="1.3"/>
<text x="1002.44" y="1279" font-size="9.6" fill="#666" text-anchor="middle" >Oct 11</text>
<line x1="1075.27" y1="1264" x2="1075.27" y2="1270.5" stroke="#9a9a9a" stroke-width="1.3"/>
<text x="1075.27" y="1279" font-size="9.6" fill="#666" text-anchor="middle" >12:00</text>
<line x1="1148.1" y1="1264" x2="1148.1" y2="1270.5" stroke="#9a9a9a" stroke-width="1.3"/>
<text x="1148.1" y="1279" font-size="9.6" fill="#666" text-anchor="middle" >Oct 12</text>
<line x1="1220.93" y1="1264" x2="1220.93" y2="1270.5" stroke="#9a9a9a" stroke-width="1.3"/>
<text x="1220.93" y="1279" font-size="9.6" fill="#666" text-anchor="middle" >12:00</text>
<line x1="1293.76" y1="1264" x2="1293.76" y2="1270.5" stroke="#9a9a9a" stroke-width="1.3"/>
<text x="1293.76" y="1279" font-size="9.6" fill="#666" text-anchor="middle" >Oct 13</text>
<line x1="1366.59" y1="1264" x2="1366.59" y2="1270.5" stroke="#9a9a9a" stroke-width="1.3"/>
<text x="1366.59" y="1279" font-size="9.6" fill="#666" text-anchor="middle" >12:00</text>
<text transform="translate(310,1258) rotate(-90)" font-size="12" fill="#999" text-anchor="start" x="0" y="0">Total Time in Queue</text>
<line x1="365.5" y1="1219.91" x2="1388" y2="1219.91" stroke="#3b91c9" stroke-width="1.3" stroke-dasharray="10 10"/>
<text x="373.5" y="1211.91" font-size="12.6" fill="#218bc5" text-anchor="start" >Average (4hrs 16min 17s)</text>
</svg><svg class="ch" style="left:1418px;top:1026px" width="1111" height="282" viewBox="1418 1026 1111 282">
<text x="1443" y="1058" font-size="21" fill="#23282d" text-anchor="start" >Average Batch Size</text>
<circle cx="2509.5" cy="1051" r="7.6" fill="none" stroke="#4b5058" stroke-width="1.4"/><path d="M2507.1,1049.4 a2.5,2.5 0 1 1 3.6,2.2 c-0.9,0.45 -1.2,0.9 -1.2,1.9" fill="none" stroke="#4b5058" stroke-width="1.4" stroke-linecap="round"/><circle cx="2509.5" cy="1055.3" r="0.85" fill="#4b5058"/>
<line x1="1492.5" y1="1104" x2="2515" y2="1104" stroke="#dcdcdc" stroke-width="1.5"/>
<line x1="1492.5" y1="1237.33" x2="2515" y2="1237.33" stroke="#dedede" stroke-width="1"/>
<line x1="1492.5" y1="1210.67" x2="2515" y2="1210.67" stroke="#dedede" stroke-width="1"/>
<line x1="1492.5" y1="1184" x2="2515" y2="1184" stroke="#dedede" stroke-width="1"/>
<line x1="1492.5" y1="1157.33" x2="2515" y2="1157.33" stroke="#dedede" stroke-width="1"/>
<line x1="1492.5" y1="1104" x2="2515" y2="1104" stroke="#dedede" stroke-width="1"/>
<path d="M1559.5,1210.67 C1632.34,1210.67 1632.34,1264 1705.17,1264 C1778.01,1264 1778.01,1210.67 1850.84,1210.67 C1923.67,1210.67 1923.67,1176.53 1996.51,1176.53 C2069.34,1176.53 2069.34,1264 2142.18,1264 C2215.01,1264 2215.01,1210.67 2287.85,1210.67 C2360.68,1210.67 2360.68,1192 2433.52,1192 L2433.52,1264 C2360.68,1264 2360.68,1264 2287.85,1264 C2215.01,1264 2215.01,1264 2142.18,1264 C2069.34,1264 2069.34,1264 1996.51,1264 C1923.67,1264 1923.67,1264 1850.84,1264 C1778.01,1264 1778.01,1264 1705.17,1264 C1632.34,1264 1632.34,1264 1559.5,1264 Z" fill="#e283e6"/>
<path d="M1559.5,1210.67 C1632.34,1210.67 1632.34,1210.67 1705.17,1210.67 C1778.01,1210.67 1778.01,1157.33 1850.84,1157.33 C1923.67,1157.33 1923.67,1176.53 1996.51,1176.53 C2069.34,1176.53 2069.34,1264 2142.18,1264 C2215.01,1264 2215.01,1210.67 2287.85,1210.67 C2360.68,1210.67 2360.68,1192 2433.52,1192 L2433.52,1192 C2360.68,1192 2360.68,1210.67 2287.85,1210.67 C2215.01,1210.67 2215.01,1264 2142.18,1264 C2069.34,1264 2069.34,1176.53 1996.51,1176.53 C1923.67,1176.53 1923.67,1210.67 1850.84,1210.67 C1778.01,1210.67 1778.01,1264 1705.17,1264 C1632.34,1264 1632.34,1210.67 1559.5,1210.67 Z" fill="#d7a3f3"/>
<path d="M1559.5,1157.33 C1632.34,1157.33 1632.34,1157.33 1705.17,1157.33 C1778.01,1157.33 1778.01,1104 1850.84,1104 C1923.67,1104 1923.67,1121.6 1996.51,1121.6 C2069.34,1121.6 2069.34,1264 2142.18,1264 C2215.01,1264 2215.01,1210.67 2287.85,1210.67 C2360.68,1210.67 2360.68,1139.2 2433.52,1139.2 L2433.52,1192 C2360.68,1192 2360.68,1210.67 2287.85,1210.67 C2215.01,1210.67 2215.01,1264 2142.18,1264 C2069.34,1264 2069.34,1176.53 1996.51,1176.53 C1923.67,1176.53 1923.67,1157.33 1850.84,1157.33 C1778.01,1157.33 1778.01,1210.67 1705.17,1210.67 C1632.34,1210.67 1632.34,1210.67 1559.5,1210.67 Z" fill="#e9a192"/>
<path d="M1559.5,1104 C1632.34,1104 1632.34,1157.33 1705.17,1157.33 C1778.01,1157.33 1778.01,1104 1850.84,1104 C1923.67,1104 1923.67,1121.6 1996.51,1121.6 C2069.34,1121.6 2069.34,1264 2142.18,1264 C2215.01,1264 2215.01,1210.67 2287.85,1210.67 C2360.68,1210.67 2360.68,1139.2 2433.52,1139.2 L2433.52,1139.2 C2360.68,1139.2 2360.68,1210.67 2287.85,1210.67 C2215.01,1210.67 2215.01,1264 2142.18,1264 C2069.34,1264 2069.34,1121.6 1996.51,1121.6 C1923.67,1121.6 1923.67,1104 1850.84,1104 C1778.01,1104 1778.01,1157.33 1705.17,1157.33 C1632.34,1157.33 1632.34,1157.33 1559.5,1157.33 Z" fill="#a7e6c5"/>
<clipPath id="clip1418_1026"><path d="M1559.5,1104 C1632.34,1104 1632.34,1157.33 1705.17,1157.33 C1778.01,1157.33 1778.01,1104 1850.84,1104 C1923.67,1104 1923.67,1121.6 1996.51,1121.6 C2069.34,1121.6 2069.34,1264 2142.18,1264 C2215.01,1264 2215.01,1210.67 2287.85,1210.67 C2360.68,1210.67 2360.68,1139.2 2433.52,1139.2 L2433.52,1264 L1559.5,1264 Z"/></clipPath><g clip-path="url(#clip1418_1026)">
<line x1="1559.5" y1="1237.33" x2="2433.52" y2="1237.33" stroke="#000" stroke-opacity="0.07" stroke-width="1"/>
<line x1="1559.5" y1="1210.67" x2="2433.52" y2="1210.67" stroke="#000" stroke-opacity="0.07" stroke-width="1"/>
<line x1="1559.5" y1="1184" x2="2433.52" y2="1184" stroke="#000" stroke-opacity="0.07" stroke-width="1"/>
<line x1="1559.5" y1="1157.33" x2="2433.52" y2="1157.33" stroke="#000" stroke-opacity="0.07" stroke-width="1"/>
<line x1="1559.5" y1="1104" x2="2433.52" y2="1104" stroke="#000" stroke-opacity="0.07" stroke-width="1"/>
</g>
<path d="M1559.5,1210.67 C1632.34,1210.67 1632.34,1264 1705.17,1264 C1778.01,1264 1778.01,1210.67 1850.84,1210.67 C1923.67,1210.67 1923.67,1176.53 1996.51,1176.53 C2069.34,1176.53 2069.34,1264 2142.18,1264 C2215.01,1264 2215.01,1210.67 2287.85,1210.67 C2360.68,1210.67 2360.68,1192 2433.52,1192" fill="none" stroke="#303030" stroke-opacity="0.92" stroke-width="1"/>
<path d="M1559.5,1210.67 C1632.34,1210.67 1632.34,1210.67 1705.17,1210.67 C1778.01,1210.67 1778.01,1157.33 1850.84,1157.33 C1923.67,1157.33 1923.67,1176.53 1996.51,1176.53 C2069.34,1176.53 2069.34,1264 2142.18,1264 C2215.01,1264 2215.01,1210.67 2287.85,1210.67 C2360.68,1210.67 2360.68,1192 2433.52,1192" fill="none" stroke="#303030" stroke-opacity="0.92" stroke-width="1"/>
<path d="M1559.5,1157.33 C1632.34,1157.33 1632.34,1157.33 1705.17,1157.33 C1778.01,1157.33 1778.01,1104 1850.84,1104 C1923.67,1104 1923.67,1121.6 1996.51,1121.6 C2069.34,1121.6 2069.34,1264 2142.18,1264 C2215.01,1264 2215.01,1210.67 2287.85,1210.67 C2360.68,1210.67 2360.68,1139.2 2433.52,1139.2" fill="none" stroke="#303030" stroke-opacity="0.92" stroke-width="1"/>
<path d="M1559.5,1104 C1632.34,1104 1632.34,1157.33 1705.17,1157.33 C1778.01,1157.33 1778.01,1104 1850.84,1104 C1923.67,1104 1923.67,1121.6 1996.51,1121.6 C2069.34,1121.6 2069.34,1264 2142.18,1264 C2215.01,1264 2215.01,1210.67 2287.85,1210.67 C2360.68,1210.67 2360.68,1139.2 2433.52,1139.2" fill="none" stroke="#303030" stroke-opacity="0.92" stroke-width="1"/>
<line x1="1492.5" y1="1104" x2="1492.5" y2="1264.75" stroke="#9a9a9a" stroke-width="1.6"/>
<line x1="1492.5" y1="1264" x2="2515" y2="1264" stroke="#9a9a9a" stroke-width="1.6"/>
<line x1="1486" y1="1264" x2="1492.5" y2="1264" stroke="#9a9a9a" stroke-width="1.3"/>
<text x="1483.5" y="1268.5" font-size="12.6" fill="#555" text-anchor="end" >0</text>
<line x1="1486" y1="1237.33" x2="1492.5" y2="1237.33" stroke="#9a9a9a" stroke-width="1.3"/>
<text x="1483.5" y="1241.83" font-size="12.6" fill="#555" text-anchor="end" >0.5</text>
<line x1="1486" y1="1210.67" x2="1492.5" y2="1210.67" stroke="#9a9a9a" stroke-width="1.3"/>
<text x="1483.5" y="1215.17" font-size="12.6" fill="#555" text-anchor="end" >1</text>
<line x1="1486" y1="1184" x2="1492.5" y2="1184" stroke="#9a9a9a" stroke-width="1.3"/>
<text x="1483.5" y="1188.5" font-size="12.6" fill="#555" text-anchor="end" >1.5</text>
<line x1="1486" y1="1157.33" x2="1492.5" y2="1157.33" stroke="#9a9a9a" stroke-width="1.3"/>
<text x="1483.5" y="1161.83" font-size="12.6" fill="#555" text-anchor="end" >2</text>
<line x1="1486" y1="1104" x2="1492.5" y2="1104" stroke="#9a9a9a" stroke-width="1.3"/>
<text x="1483.5" y="1111.5" font-size="12.6" fill="#555" text-anchor="end" >3</text>
<line x1="1546.8" y1="1264" x2="1546.8" y2="1270.5" stroke="#9a9a9a" stroke-width="1.3"/>
<text x="1546.8" y="1279" font-size="9.6" fill="#666" text-anchor="middle" >Oct 7</text>
<line x1="1619.63" y1="1264" x2="1619.63" y2="1270.5" stroke="#9a9a9a" stroke-width="1.3"/>
<text x="1619.63" y="1279" font-size="9.6" fill="#666" text-anchor="middle" >12:00</text>
<line x1="1692.46" y1="1264" x2="1692.46" y2="1270.5" stroke="#9a9a9a" stroke-width="1.3"/>
<text x="1692.46" y="1279" font-size="9.6" fill="#666" text-anchor="middle" >Oct 8</text>
<line x1="1765.29" y1="1264" x2="1765.29" y2="1270.5" stroke="#9a9a9a" stroke-width="1.3"/>
<text x="1765.29" y="1279" font-size="9.6" fill="#666" text-anchor="middle" >12:00</text>
<line x1="1838.12" y1="1264" x2="1838.12" y2="1270.5" stroke="#9a9a9a" stroke-width="1.3"/>
<text x="1838.12" y="1279" font-size="9.6" fill="#666" text-anchor="middle" >Oct 9</text>
<line x1="1910.95" y1="1264" x2="1910.95" y2="1270.5" stroke="#9a9a9a" stroke-width="1.3"/>
<text x="1910.95" y="1279" font-size="9.6" fill="#666" text-anchor="middle" >12:00</text>
<line x1="1983.78" y1="1264" x2="1983.78" y2="1270.5" stroke="#9a9a9a" stroke-width="1.3"/>
<text x="1983.78" y="1279" font-size="9.6" fill="#666" text-anchor="middle" >Oct 10</text>
<line x1="2056.61" y1="1264" x2="2056.61" y2="1270.5" stroke="#9a9a9a" stroke-width="1.3"/>
<text x="2056.61" y="1279" font-size="9.6" fill="#666" text-anchor="middle" >12:00</text>
<line x1="2129.44" y1="1264" x2="2129.44" y2="1270.5" stroke="#9a9a9a" stroke-width="1.3"/>
<text x="2129.44" y="1279" font-size="9.6" fill="#666" text-anchor="middle" >Oct 11</text>
<line x1="2202.27" y1="1264" x2="2202.27" y2="1270.5" stroke="#9a9a9a" stroke-width="1.3"/>
<text x="2202.27" y="1279" font-size="9.6" fill="#666" text-anchor="middle" >12:00</text>
<line x1="2275.1" y1="1264" x2="2275.1" y2="1270.5" stroke="#9a9a9a" stroke-width="1.3"/>
<text x="2275.1" y="1279" font-size="9.6" fill="#666" text-anchor="middle" >Oct 12</text>
<line x1="2347.93" y1="1264" x2="2347.93" y2="1270.5" stroke="#9a9a9a" stroke-width="1.3"/>
<text x="2347.93" y="1279" font-size="9.6" fill="#666" text-anchor="middle" >12:00</text>
<line x1="2420.76" y1="1264" x2="2420.76" y2="1270.5" stroke="#9a9a9a" stroke-width="1.3"/>
<text x="2420.76" y="1279" font-size="9.6" fill="#666" text-anchor="middle" >Oct 13</text>
<line x1="2493.59" y1="1264" x2="2493.59" y2="1270.5" stroke="#9a9a9a" stroke-width="1.3"/>
<text x="2493.59" y="1279" font-size="9.6" fill="#666" text-anchor="middle" >12:00</text>
<text transform="translate(1437,1258) rotate(-90)" font-size="12" fill="#999" text-anchor="start" x="0" y="0">Batch Size</text>
<line x1="1492.5" y1="1139.2" x2="2515" y2="1139.2" stroke="#3b91c9" stroke-width="1.3" stroke-dasharray="10 10"/>
<text x="1500.5" y="1131.2" font-size="12.6" fill="#218bc5" text-anchor="start" >Average (2.34)</text>
</svg><svg class="ch" style="left:291px;top:132px" width="1111" height="282" viewBox="291 132 1111 282">
<text x="316" y="164" font-size="21" fill="#23282d" text-anchor="start" >Merge Queue Checks Outcomes</text>
<circle cx="1382.5" cy="157" r="7.6" fill="none" stroke="#4b5058" stroke-width="1.4"/><path d="M1380.1,155.4 a2.5,2.5 0 1 1 3.6,2.2 c-0.9,0.45 -1.2,0.9 -1.2,1.9" fill="none" stroke="#4b5058" stroke-width="1.4" stroke-linecap="round"/><circle cx="1382.5" cy="161.3" r="0.85" fill="#4b5058"/>
<path d="M574.4,305.04 A69.2,69.2 0 0 1 574.14,310.83 L545.45,308.32 A40.4,40.4 0 0 0 545.6,304.94 Z" fill="#fec20e" stroke="#fff" stroke-width="1"/>
<path d="M574.14,310.83 A69.2,69.2 0 0 1 573.26,317.29 L544.94,312.09 A40.4,40.4 0 0 0 545.45,308.32 Z" fill="#6dd6c7" stroke="#fff" stroke-width="1"/>
<path d="M573.26,317.29 A69.2,69.2 0 0 1 567.4,335.14 L541.51,322.51 A40.4,40.4 0 0 0 544.94,312.09 Z" fill="#d9f562" stroke="#fff" stroke-width="1"/>
<path d="M567.4,335.14 A69.2,69.2 0 0 1 513.63,373.48 L510.12,344.9 A40.4,40.4 0 0 0 541.51,322.51 Z" fill="#4d9ee0" stroke="#fff" stroke-width="1"/>
<path d="M513.63,373.48 A69.2,69.2 0 1 1 574.4,305.04 L545.6,304.94 A40.4,40.4 0 1 0 510.12,344.9 Z" fill="#58c78c" stroke="#fff" stroke-width="1"/>
<text x="505.2" y="303" font-size="25" fill="#1d2126" text-anchor="middle" >73</text>
<text x="505.2" y="327" font-size="14" fill="#333" text-anchor="middle" >Checks</text>
<circle cx="1017.5" cy="214.4" r="7.4" fill="#58c78c"/>
<text x="1034" y="218.7" font-size="12.8" fill="#2a2e33" text-anchor="start" >Successful merge</text>
<text x="1374" y="218.7" font-size="12.6" fill="#383c42" font-weight="700" text-anchor="end" >54</text>
<circle cx="1387.3" cy="214.4" r="4.4" fill="none" stroke="#6b6f75" stroke-width="0.9"/>
<line x1="1387.3" y1="213.8" x2="1387.3" y2="216.8" stroke="#6b6f75" stroke-width="0.9"/>
<circle cx="1387.3" cy="212.2" r="0.55" fill="#6b6f75"/>
<circle cx="1017.5" cy="241.15" r="7.4" fill="#4d9ee0"/>
<text x="1034" y="245.45" font-size="12.8" fill="#2a2e33" text-anchor="start" >Higher priority queued</text>
<text x="1374" y="245.45" font-size="12.6" fill="#383c42" font-weight="700" text-anchor="end" >11</text>
<circle cx="1387.3" cy="241.15" r="4.4" fill="none" stroke="#6b6f75" stroke-width="0.9"/>
<line x1="1387.3" y1="240.55" x2="1387.3" y2="243.55" stroke="#6b6f75" stroke-width="0.9"/>
<circle cx="1387.3" cy="238.95" r="0.55" fill="#6b6f75"/>
<circle cx="1017.5" cy="267.9" r="7.4" fill="#d9f562"/>
<text x="1034" y="272.2" font-size="12.8" fill="#2a2e33" text-anchor="start" >Checks failed</text>
<text x="1374" y="272.2" font-size="12.6" fill="#383c42" font-weight="700" text-anchor="end" >3</text>
<circle cx="1387.3" cy="267.9" r="4.4" fill="none" stroke="#6b6f75" stroke-width="0.9"/>
<line x1="1387.3" y1="267.3" x2="1387.3" y2="270.3" stroke="#6b6f75" stroke-width="0.9"/>
<circle cx="1387.3" cy="265.7" r="0.55" fill="#6b6f75"/>
<circle cx="1017.5" cy="294.65" r="7.4" fill="#6dd6c7"/>
<text x="1034" y="298.95" font-size="12.8" fill="#2a2e33" text-anchor="start" >Dequeued</text>
<text x="1374" y="298.95" font-size="12.6" fill="#383c42" font-weight="700" text-anchor="end" >1</text>
<circle cx="1387.3" cy="294.65" r="4.4" fill="none" stroke="#6b6f75" stroke-width="0.9"/>
<line x1="1387.3" y1="294.05" x2="1387.3" y2="297.05" stroke="#6b6f75" stroke-width="0.9"/>
<circle cx="1387.3" cy="292.45" r="0.55" fill="#6b6f75"/>
<circle cx="1017.5" cy="321.4" r="7.4" fill="#fec20e"/>
<text x="1034" y="325.7" font-size="12.8" fill="#2a2e33" text-anchor="start" >Pull request updated</text>
<text x="1374" y="325.7" font-size="12.6" fill="#383c42" font-weight="700" text-anchor="end" >1</text>
<circle cx="1387.3" cy="321.4" r="4.4" fill="none" stroke="#6b6f75" stroke-width="0.9"/>
<line x1="1387.3" y1="320.8" x2="1387.3" y2="323.8" stroke="#6b6f75" stroke-width="0.9"/>
<circle cx="1387.3" cy="319.2" r="0.55" fill="#6b6f75"/>
</svg>
</body></html>
